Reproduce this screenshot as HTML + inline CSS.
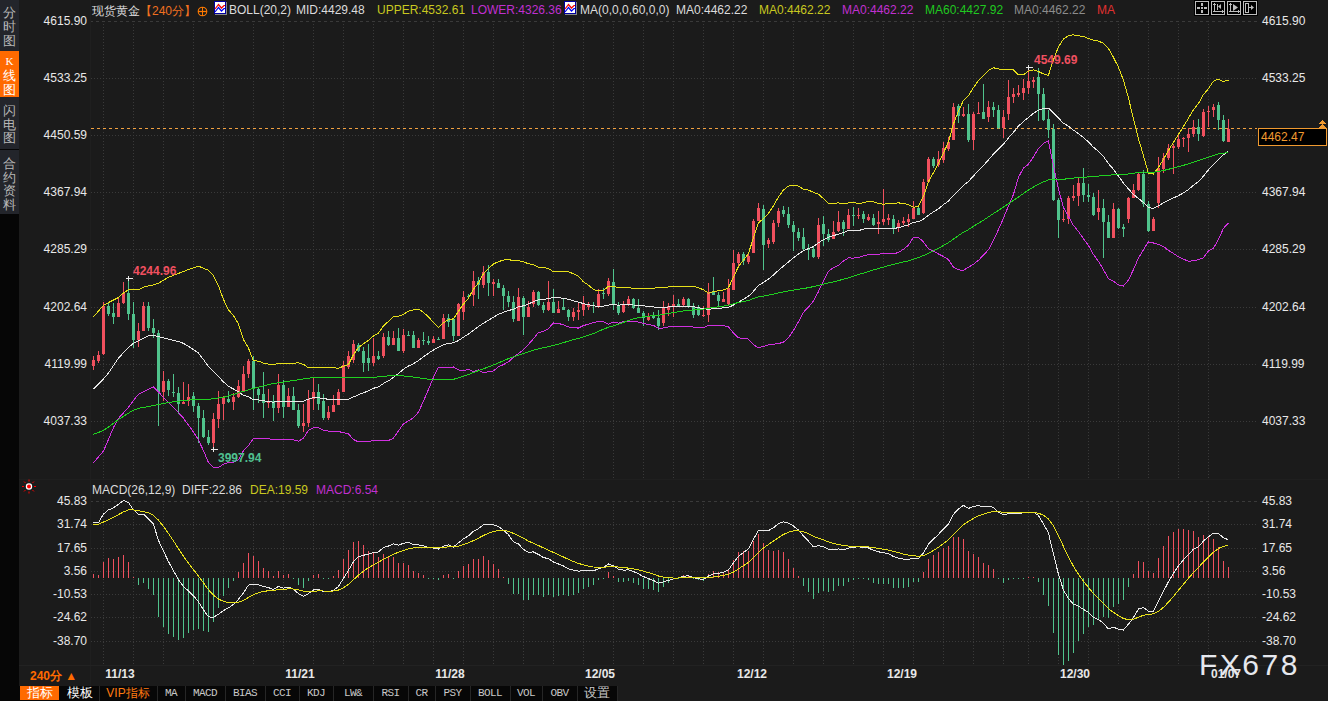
<!DOCTYPE html>
<html><head><meta charset="utf-8"><style>
html,body{margin:0;padding:0;}
body{width:1328px;height:701px;overflow:hidden;position:relative;background:#1b1b1b;font-family:"Liberation Sans", sans-serif;}
svg{position:absolute;left:0;top:0;}
.t{position:absolute;white-space:nowrap;}
</style></head><body>
<svg width="1328" height="701" shape-rendering="crispEdges">
<line x1="90" y1="21.5" x2="1257" y2="21.5" stroke="#3a3a3a" stroke-dasharray="3 3"/>
<line x1="91" y1="78.5" x2="1257" y2="78.5" stroke="#3a3a3a" stroke-dasharray="1 2"/>
<line x1="91" y1="135.5" x2="1257" y2="135.5" stroke="#3a3a3a" stroke-dasharray="1 2"/>
<line x1="91" y1="192.5" x2="1257" y2="192.5" stroke="#3a3a3a" stroke-dasharray="1 2"/>
<line x1="91" y1="249.5" x2="1257" y2="249.5" stroke="#3a3a3a" stroke-dasharray="1 2"/>
<line x1="91" y1="307.5" x2="1257" y2="307.5" stroke="#3a3a3a" stroke-dasharray="1 2"/>
<line x1="91" y1="364.5" x2="1257" y2="364.5" stroke="#3a3a3a" stroke-dasharray="1 2"/>
<line x1="91" y1="421.5" x2="1257" y2="421.5" stroke="#3a3a3a" stroke-dasharray="1 2"/>
<line x1="90" y1="501.5" x2="1257" y2="501.5" stroke="#3a3a3a" stroke-dasharray="3 3"/>
<line x1="91" y1="524.5" x2="1257" y2="524.5" stroke="#3a3a3a" stroke-dasharray="1 2"/>
<line x1="91" y1="548.5" x2="1257" y2="548.5" stroke="#3a3a3a" stroke-dasharray="1 2"/>
<line x1="91" y1="571.5" x2="1257" y2="571.5" stroke="#3a3a3a" stroke-dasharray="1 2"/>
<line x1="91" y1="594.5" x2="1257" y2="594.5" stroke="#3a3a3a" stroke-dasharray="1 2"/>
<line x1="91" y1="617.5" x2="1257" y2="617.5" stroke="#3a3a3a" stroke-dasharray="1 2"/>
<line x1="91" y1="641.5" x2="1257" y2="641.5" stroke="#3a3a3a" stroke-dasharray="1 2"/>
<line x1="103.5" y1="24" x2="103.5" y2="478" stroke="#3a3a3a" stroke-dasharray="1 2"/>
<line x1="103.5" y1="504" x2="103.5" y2="664" stroke="#3a3a3a" stroke-dasharray="1 2"/>
<line x1="133.5" y1="24" x2="133.5" y2="478" stroke="#3a3a3a" stroke-dasharray="1 2"/>
<line x1="133.5" y1="504" x2="133.5" y2="664" stroke="#3a3a3a" stroke-dasharray="1 2"/>
<line x1="163.5" y1="24" x2="163.5" y2="478" stroke="#3a3a3a" stroke-dasharray="1 2"/>
<line x1="163.5" y1="504" x2="163.5" y2="664" stroke="#3a3a3a" stroke-dasharray="1 2"/>
<line x1="193.5" y1="24" x2="193.5" y2="478" stroke="#3a3a3a" stroke-dasharray="1 2"/>
<line x1="193.5" y1="504" x2="193.5" y2="664" stroke="#3a3a3a" stroke-dasharray="1 2"/>
<line x1="223.5" y1="24" x2="223.5" y2="478" stroke="#3a3a3a" stroke-dasharray="1 2"/>
<line x1="223.5" y1="504" x2="223.5" y2="664" stroke="#3a3a3a" stroke-dasharray="1 2"/>
<line x1="253.5" y1="24" x2="253.5" y2="478" stroke="#3a3a3a" stroke-dasharray="1 2"/>
<line x1="253.5" y1="504" x2="253.5" y2="664" stroke="#3a3a3a" stroke-dasharray="1 2"/>
<line x1="283.5" y1="24" x2="283.5" y2="478" stroke="#3a3a3a" stroke-dasharray="1 2"/>
<line x1="283.5" y1="504" x2="283.5" y2="664" stroke="#3a3a3a" stroke-dasharray="1 2"/>
<line x1="313.5" y1="24" x2="313.5" y2="478" stroke="#3a3a3a" stroke-dasharray="1 2"/>
<line x1="313.5" y1="504" x2="313.5" y2="664" stroke="#3a3a3a" stroke-dasharray="1 2"/>
<line x1="343.5" y1="24" x2="343.5" y2="478" stroke="#3a3a3a" stroke-dasharray="1 2"/>
<line x1="343.5" y1="504" x2="343.5" y2="664" stroke="#3a3a3a" stroke-dasharray="1 2"/>
<line x1="373.5" y1="24" x2="373.5" y2="478" stroke="#3a3a3a" stroke-dasharray="1 2"/>
<line x1="373.5" y1="504" x2="373.5" y2="664" stroke="#3a3a3a" stroke-dasharray="1 2"/>
<line x1="403.5" y1="24" x2="403.5" y2="478" stroke="#3a3a3a" stroke-dasharray="1 2"/>
<line x1="403.5" y1="504" x2="403.5" y2="664" stroke="#3a3a3a" stroke-dasharray="1 2"/>
<line x1="433.5" y1="24" x2="433.5" y2="478" stroke="#3a3a3a" stroke-dasharray="1 2"/>
<line x1="433.5" y1="504" x2="433.5" y2="664" stroke="#3a3a3a" stroke-dasharray="1 2"/>
<line x1="463.5" y1="24" x2="463.5" y2="478" stroke="#3a3a3a" stroke-dasharray="1 2"/>
<line x1="463.5" y1="504" x2="463.5" y2="664" stroke="#3a3a3a" stroke-dasharray="1 2"/>
<line x1="493.5" y1="24" x2="493.5" y2="478" stroke="#3a3a3a" stroke-dasharray="1 2"/>
<line x1="493.5" y1="504" x2="493.5" y2="664" stroke="#3a3a3a" stroke-dasharray="1 2"/>
<line x1="523.5" y1="24" x2="523.5" y2="478" stroke="#3a3a3a" stroke-dasharray="1 2"/>
<line x1="523.5" y1="504" x2="523.5" y2="664" stroke="#3a3a3a" stroke-dasharray="1 2"/>
<line x1="553.5" y1="24" x2="553.5" y2="478" stroke="#3a3a3a" stroke-dasharray="1 2"/>
<line x1="553.5" y1="504" x2="553.5" y2="664" stroke="#3a3a3a" stroke-dasharray="1 2"/>
<line x1="583.5" y1="24" x2="583.5" y2="478" stroke="#3a3a3a" stroke-dasharray="1 2"/>
<line x1="583.5" y1="504" x2="583.5" y2="664" stroke="#3a3a3a" stroke-dasharray="1 2"/>
<line x1="613.5" y1="24" x2="613.5" y2="478" stroke="#3a3a3a" stroke-dasharray="1 2"/>
<line x1="613.5" y1="504" x2="613.5" y2="664" stroke="#3a3a3a" stroke-dasharray="1 2"/>
<line x1="643.5" y1="24" x2="643.5" y2="478" stroke="#3a3a3a" stroke-dasharray="1 2"/>
<line x1="643.5" y1="504" x2="643.5" y2="664" stroke="#3a3a3a" stroke-dasharray="1 2"/>
<line x1="673.5" y1="24" x2="673.5" y2="478" stroke="#3a3a3a" stroke-dasharray="1 2"/>
<line x1="673.5" y1="504" x2="673.5" y2="664" stroke="#3a3a3a" stroke-dasharray="1 2"/>
<line x1="703.5" y1="24" x2="703.5" y2="478" stroke="#3a3a3a" stroke-dasharray="1 2"/>
<line x1="703.5" y1="504" x2="703.5" y2="664" stroke="#3a3a3a" stroke-dasharray="1 2"/>
<line x1="733.5" y1="24" x2="733.5" y2="478" stroke="#3a3a3a" stroke-dasharray="1 2"/>
<line x1="733.5" y1="504" x2="733.5" y2="664" stroke="#3a3a3a" stroke-dasharray="1 2"/>
<line x1="763.5" y1="24" x2="763.5" y2="478" stroke="#3a3a3a" stroke-dasharray="1 2"/>
<line x1="763.5" y1="504" x2="763.5" y2="664" stroke="#3a3a3a" stroke-dasharray="1 2"/>
<line x1="793.5" y1="24" x2="793.5" y2="478" stroke="#3a3a3a" stroke-dasharray="1 2"/>
<line x1="793.5" y1="504" x2="793.5" y2="664" stroke="#3a3a3a" stroke-dasharray="1 2"/>
<line x1="823.5" y1="24" x2="823.5" y2="478" stroke="#3a3a3a" stroke-dasharray="1 2"/>
<line x1="823.5" y1="504" x2="823.5" y2="664" stroke="#3a3a3a" stroke-dasharray="1 2"/>
<line x1="853.5" y1="24" x2="853.5" y2="478" stroke="#3a3a3a" stroke-dasharray="1 2"/>
<line x1="853.5" y1="504" x2="853.5" y2="664" stroke="#3a3a3a" stroke-dasharray="1 2"/>
<line x1="883.5" y1="24" x2="883.5" y2="478" stroke="#3a3a3a" stroke-dasharray="1 2"/>
<line x1="883.5" y1="504" x2="883.5" y2="664" stroke="#3a3a3a" stroke-dasharray="1 2"/>
<line x1="913.5" y1="24" x2="913.5" y2="478" stroke="#3a3a3a" stroke-dasharray="1 2"/>
<line x1="913.5" y1="504" x2="913.5" y2="664" stroke="#3a3a3a" stroke-dasharray="1 2"/>
<line x1="943.5" y1="24" x2="943.5" y2="478" stroke="#3a3a3a" stroke-dasharray="1 2"/>
<line x1="943.5" y1="504" x2="943.5" y2="664" stroke="#3a3a3a" stroke-dasharray="1 2"/>
<line x1="973.5" y1="24" x2="973.5" y2="478" stroke="#3a3a3a" stroke-dasharray="1 2"/>
<line x1="973.5" y1="504" x2="973.5" y2="664" stroke="#3a3a3a" stroke-dasharray="1 2"/>
<line x1="1003.5" y1="24" x2="1003.5" y2="478" stroke="#3a3a3a" stroke-dasharray="1 2"/>
<line x1="1003.5" y1="504" x2="1003.5" y2="664" stroke="#3a3a3a" stroke-dasharray="1 2"/>
<line x1="1028.5" y1="24" x2="1028.5" y2="478" stroke="#3a3a3a" stroke-dasharray="1 2"/>
<line x1="1028.5" y1="504" x2="1028.5" y2="664" stroke="#3a3a3a" stroke-dasharray="1 2"/>
<line x1="1058.5" y1="24" x2="1058.5" y2="478" stroke="#3a3a3a" stroke-dasharray="1 2"/>
<line x1="1058.5" y1="504" x2="1058.5" y2="664" stroke="#3a3a3a" stroke-dasharray="1 2"/>
<line x1="1088.5" y1="24" x2="1088.5" y2="478" stroke="#3a3a3a" stroke-dasharray="1 2"/>
<line x1="1088.5" y1="504" x2="1088.5" y2="664" stroke="#3a3a3a" stroke-dasharray="1 2"/>
<line x1="1118.5" y1="24" x2="1118.5" y2="478" stroke="#3a3a3a" stroke-dasharray="1 2"/>
<line x1="1118.5" y1="504" x2="1118.5" y2="664" stroke="#3a3a3a" stroke-dasharray="1 2"/>
<line x1="1148.5" y1="24" x2="1148.5" y2="478" stroke="#3a3a3a" stroke-dasharray="1 2"/>
<line x1="1148.5" y1="504" x2="1148.5" y2="664" stroke="#3a3a3a" stroke-dasharray="1 2"/>
<line x1="1178.5" y1="24" x2="1178.5" y2="478" stroke="#3a3a3a" stroke-dasharray="1 2"/>
<line x1="1178.5" y1="504" x2="1178.5" y2="664" stroke="#3a3a3a" stroke-dasharray="1 2"/>
<line x1="1208.5" y1="24" x2="1208.5" y2="478" stroke="#3a3a3a" stroke-dasharray="1 2"/>
<line x1="1208.5" y1="504" x2="1208.5" y2="664" stroke="#3a3a3a" stroke-dasharray="1 2"/>
<rect x="90" y="0" width="1" height="686" fill="#1f1f1f"/>
<rect x="19" y="479" width="1309" height="1" fill="#1f1f1f"/>
<rect x="19" y="665" width="1309" height="1" fill="#222222"/>
<line x1="91" y1="128.5" x2="1257" y2="128.5" stroke="#f0a040" stroke-dasharray="3 3"/>
<rect x="93" y="356" width="1" height="14" fill="#f0505e"/>
<rect x="92" y="360" width="3" height="6" fill="#f0505e"/>
<rect x="98" y="351" width="1" height="12" fill="#f0505e"/>
<rect x="97" y="355" width="3" height="6" fill="#f0505e"/>
<rect x="103" y="302" width="1" height="53" fill="#f0505e"/>
<rect x="102" y="306" width="3" height="48" fill="#f0505e"/>
<rect x="108" y="303" width="1" height="13" fill="#50c38c"/>
<rect x="107" y="306" width="3" height="8" fill="#50c38c"/>
<rect x="113" y="303" width="1" height="21" fill="#50c38c"/>
<rect x="112" y="313" width="3" height="4" fill="#50c38c"/>
<rect x="118" y="298" width="1" height="19" fill="#f0505e"/>
<rect x="117" y="303" width="3" height="14" fill="#f0505e"/>
<rect x="123" y="282" width="1" height="22" fill="#f0505e"/>
<rect x="122" y="293" width="3" height="10" fill="#f0505e"/>
<rect x="128" y="276" width="1" height="44" fill="#50c38c"/>
<rect x="127" y="293" width="3" height="21" fill="#50c38c"/>
<rect x="133" y="302" width="1" height="46" fill="#50c38c"/>
<rect x="132" y="314" width="3" height="26" fill="#50c38c"/>
<rect x="138" y="323" width="1" height="24" fill="#f0505e"/>
<rect x="137" y="331" width="3" height="9" fill="#f0505e"/>
<rect x="143" y="302" width="1" height="29" fill="#f0505e"/>
<rect x="142" y="306" width="3" height="25" fill="#f0505e"/>
<rect x="148" y="302" width="1" height="29" fill="#50c38c"/>
<rect x="147" y="306" width="3" height="22" fill="#50c38c"/>
<rect x="153" y="319" width="1" height="19" fill="#50c38c"/>
<rect x="152" y="328" width="3" height="5" fill="#50c38c"/>
<rect x="158" y="330" width="1" height="96" fill="#50c38c"/>
<rect x="157" y="333" width="3" height="59" fill="#50c38c"/>
<rect x="163" y="371" width="1" height="30" fill="#f0505e"/>
<rect x="162" y="381" width="3" height="11" fill="#f0505e"/>
<rect x="168" y="379" width="1" height="17" fill="#50c38c"/>
<rect x="167" y="381" width="3" height="9" fill="#50c38c"/>
<rect x="173" y="374" width="1" height="23" fill="#50c38c"/>
<rect x="172" y="392" width="3" height="1" fill="#50c38c"/>
<rect x="178" y="387" width="1" height="27" fill="#50c38c"/>
<rect x="177" y="393" width="3" height="11" fill="#50c38c"/>
<rect x="183" y="382" width="1" height="22" fill="#f0505e"/>
<rect x="182" y="402" width="3" height="2" fill="#f0505e"/>
<rect x="188" y="384" width="1" height="22" fill="#f0505e"/>
<rect x="187" y="397" width="3" height="4" fill="#f0505e"/>
<rect x="193" y="392" width="1" height="20" fill="#50c38c"/>
<rect x="192" y="396" width="3" height="10" fill="#50c38c"/>
<rect x="198" y="403" width="1" height="40" fill="#50c38c"/>
<rect x="197" y="406" width="3" height="12" fill="#50c38c"/>
<rect x="203" y="410" width="1" height="28" fill="#50c38c"/>
<rect x="202" y="418" width="3" height="19" fill="#50c38c"/>
<rect x="208" y="430" width="1" height="15" fill="#50c38c"/>
<rect x="207" y="437" width="3" height="6" fill="#50c38c"/>
<rect x="213" y="413" width="1" height="37" fill="#f0505e"/>
<rect x="212" y="419" width="3" height="24" fill="#f0505e"/>
<rect x="218" y="391" width="1" height="37" fill="#f0505e"/>
<rect x="217" y="404" width="3" height="15" fill="#f0505e"/>
<rect x="223" y="396" width="1" height="24" fill="#f0505e"/>
<rect x="222" y="398" width="3" height="6" fill="#f0505e"/>
<rect x="228" y="391" width="1" height="12" fill="#50c38c"/>
<rect x="227" y="399" width="3" height="3" fill="#50c38c"/>
<rect x="233" y="393" width="1" height="17" fill="#f0505e"/>
<rect x="232" y="397" width="3" height="5" fill="#f0505e"/>
<rect x="238" y="380" width="1" height="18" fill="#f0505e"/>
<rect x="237" y="386" width="3" height="11" fill="#f0505e"/>
<rect x="243" y="366" width="1" height="25" fill="#f0505e"/>
<rect x="242" y="374" width="3" height="17" fill="#f0505e"/>
<rect x="248" y="359" width="1" height="19" fill="#f0505e"/>
<rect x="247" y="361" width="3" height="13" fill="#f0505e"/>
<rect x="253" y="356" width="1" height="54" fill="#50c38c"/>
<rect x="252" y="361" width="3" height="27" fill="#50c38c"/>
<rect x="258" y="388" width="1" height="15" fill="#50c38c"/>
<rect x="257" y="389" width="3" height="6" fill="#50c38c"/>
<rect x="263" y="372" width="1" height="46" fill="#50c38c"/>
<rect x="262" y="394" width="3" height="9" fill="#50c38c"/>
<rect x="268" y="389" width="1" height="19" fill="#f0505e"/>
<rect x="267" y="402" width="3" height="1" fill="#f0505e"/>
<rect x="273" y="395" width="1" height="26" fill="#50c38c"/>
<rect x="272" y="401" width="3" height="7" fill="#50c38c"/>
<rect x="278" y="374" width="1" height="39" fill="#f0505e"/>
<rect x="277" y="385" width="3" height="23" fill="#f0505e"/>
<rect x="283" y="380" width="1" height="38" fill="#50c38c"/>
<rect x="282" y="385" width="3" height="22" fill="#50c38c"/>
<rect x="288" y="388" width="1" height="19" fill="#f0505e"/>
<rect x="287" y="396" width="3" height="11" fill="#f0505e"/>
<rect x="293" y="387" width="1" height="23" fill="#50c38c"/>
<rect x="292" y="396" width="3" height="14" fill="#50c38c"/>
<rect x="298" y="404" width="1" height="24" fill="#50c38c"/>
<rect x="297" y="410" width="3" height="16" fill="#50c38c"/>
<rect x="303" y="404" width="1" height="28" fill="#f0505e"/>
<rect x="302" y="423" width="3" height="3" fill="#f0505e"/>
<rect x="308" y="390" width="1" height="37" fill="#f0505e"/>
<rect x="307" y="399" width="3" height="24" fill="#f0505e"/>
<rect x="313" y="378" width="1" height="32" fill="#f0505e"/>
<rect x="312" y="392" width="3" height="7" fill="#f0505e"/>
<rect x="318" y="384" width="1" height="26" fill="#50c38c"/>
<rect x="317" y="392" width="3" height="12" fill="#50c38c"/>
<rect x="323" y="394" width="1" height="26" fill="#50c38c"/>
<rect x="322" y="401" width="3" height="17" fill="#50c38c"/>
<rect x="328" y="406" width="1" height="14" fill="#f0505e"/>
<rect x="327" y="412" width="3" height="6" fill="#f0505e"/>
<rect x="333" y="395" width="1" height="17" fill="#f0505e"/>
<rect x="332" y="405" width="3" height="7" fill="#f0505e"/>
<rect x="338" y="389" width="1" height="16" fill="#f0505e"/>
<rect x="337" y="392" width="3" height="13" fill="#f0505e"/>
<rect x="343" y="361" width="1" height="31" fill="#f0505e"/>
<rect x="342" y="365" width="3" height="27" fill="#f0505e"/>
<rect x="348" y="351" width="1" height="18" fill="#f0505e"/>
<rect x="347" y="356" width="3" height="11" fill="#f0505e"/>
<rect x="353" y="340" width="1" height="23" fill="#f0505e"/>
<rect x="352" y="344" width="3" height="16" fill="#f0505e"/>
<rect x="358" y="343" width="1" height="9" fill="#50c38c"/>
<rect x="357" y="345" width="3" height="6" fill="#50c38c"/>
<rect x="363" y="347" width="1" height="25" fill="#50c38c"/>
<rect x="362" y="351" width="3" height="12" fill="#50c38c"/>
<rect x="368" y="344" width="1" height="27" fill="#50c38c"/>
<rect x="367" y="358" width="3" height="5" fill="#50c38c"/>
<rect x="373" y="338" width="1" height="28" fill="#f0505e"/>
<rect x="372" y="356" width="3" height="7" fill="#f0505e"/>
<rect x="378" y="351" width="1" height="9" fill="#50c38c"/>
<rect x="377" y="356" width="3" height="3" fill="#50c38c"/>
<rect x="383" y="333" width="1" height="25" fill="#f0505e"/>
<rect x="382" y="337" width="3" height="19" fill="#f0505e"/>
<rect x="388" y="331" width="1" height="15" fill="#50c38c"/>
<rect x="387" y="337" width="3" height="8" fill="#50c38c"/>
<rect x="393" y="331" width="1" height="14" fill="#f0505e"/>
<rect x="392" y="338" width="3" height="7" fill="#f0505e"/>
<rect x="398" y="328" width="1" height="23" fill="#50c38c"/>
<rect x="397" y="338" width="3" height="13" fill="#50c38c"/>
<rect x="403" y="329" width="1" height="24" fill="#f0505e"/>
<rect x="402" y="335" width="3" height="16" fill="#f0505e"/>
<rect x="408" y="331" width="1" height="5" fill="#50c38c"/>
<rect x="407" y="335" width="3" height="1" fill="#50c38c"/>
<rect x="413" y="331" width="1" height="17" fill="#50c38c"/>
<rect x="412" y="335" width="3" height="13" fill="#50c38c"/>
<rect x="418" y="338" width="1" height="10" fill="#f0505e"/>
<rect x="417" y="340" width="3" height="8" fill="#f0505e"/>
<rect x="423" y="332" width="1" height="13" fill="#50c38c"/>
<rect x="422" y="340" width="3" height="1" fill="#50c38c"/>
<rect x="428" y="336" width="1" height="9" fill="#50c38c"/>
<rect x="427" y="341" width="3" height="2" fill="#50c38c"/>
<rect x="433" y="336" width="1" height="7" fill="#f0505e"/>
<rect x="432" y="339" width="3" height="4" fill="#f0505e"/>
<rect x="438" y="337" width="1" height="3" fill="#50c38c"/>
<rect x="437" y="339" width="3" height="1" fill="#50c38c"/>
<rect x="443" y="314" width="1" height="25" fill="#f0505e"/>
<rect x="442" y="318" width="3" height="21" fill="#f0505e"/>
<rect x="448" y="314" width="1" height="13" fill="#50c38c"/>
<rect x="447" y="318" width="3" height="4" fill="#50c38c"/>
<rect x="453" y="318" width="1" height="23" fill="#50c38c"/>
<rect x="452" y="319" width="3" height="17" fill="#50c38c"/>
<rect x="458" y="303" width="1" height="33" fill="#f0505e"/>
<rect x="457" y="304" width="3" height="32" fill="#f0505e"/>
<rect x="463" y="291" width="1" height="29" fill="#f0505e"/>
<rect x="462" y="297" width="3" height="15" fill="#f0505e"/>
<rect x="468" y="294" width="1" height="4" fill="#50c38c"/>
<rect x="467" y="296" width="3" height="1" fill="#50c38c"/>
<rect x="473" y="271" width="1" height="35" fill="#f0505e"/>
<rect x="472" y="281" width="3" height="14" fill="#f0505e"/>
<rect x="478" y="277" width="1" height="22" fill="#50c38c"/>
<rect x="477" y="281" width="3" height="4" fill="#50c38c"/>
<rect x="483" y="266" width="1" height="22" fill="#f0505e"/>
<rect x="482" y="272" width="3" height="13" fill="#f0505e"/>
<rect x="488" y="265" width="1" height="31" fill="#50c38c"/>
<rect x="487" y="272" width="3" height="11" fill="#50c38c"/>
<rect x="493" y="279" width="1" height="17" fill="#f0505e"/>
<rect x="492" y="282" width="3" height="2" fill="#f0505e"/>
<rect x="498" y="279" width="1" height="9" fill="#50c38c"/>
<rect x="497" y="283" width="3" height="5" fill="#50c38c"/>
<rect x="503" y="285" width="1" height="25" fill="#50c38c"/>
<rect x="502" y="288" width="3" height="8" fill="#50c38c"/>
<rect x="508" y="291" width="1" height="16" fill="#50c38c"/>
<rect x="507" y="296" width="3" height="6" fill="#50c38c"/>
<rect x="513" y="296" width="1" height="26" fill="#50c38c"/>
<rect x="512" y="302" width="3" height="17" fill="#50c38c"/>
<rect x="518" y="288" width="1" height="33" fill="#f0505e"/>
<rect x="517" y="297" width="3" height="24" fill="#f0505e"/>
<rect x="523" y="296" width="1" height="39" fill="#50c38c"/>
<rect x="522" y="298" width="3" height="19" fill="#50c38c"/>
<rect x="528" y="301" width="1" height="16" fill="#f0505e"/>
<rect x="527" y="307" width="3" height="10" fill="#f0505e"/>
<rect x="533" y="290" width="1" height="17" fill="#f0505e"/>
<rect x="532" y="292" width="3" height="12" fill="#f0505e"/>
<rect x="538" y="291" width="1" height="15" fill="#50c38c"/>
<rect x="537" y="292" width="3" height="13" fill="#50c38c"/>
<rect x="543" y="302" width="1" height="11" fill="#50c38c"/>
<rect x="542" y="305" width="3" height="5" fill="#50c38c"/>
<rect x="548" y="281" width="1" height="30" fill="#f0505e"/>
<rect x="547" y="302" width="3" height="8" fill="#f0505e"/>
<rect x="553" y="289" width="1" height="24" fill="#50c38c"/>
<rect x="552" y="302" width="3" height="11" fill="#50c38c"/>
<rect x="558" y="301" width="1" height="12" fill="#f0505e"/>
<rect x="557" y="309" width="3" height="4" fill="#f0505e"/>
<rect x="563" y="298" width="1" height="12" fill="#50c38c"/>
<rect x="562" y="307" width="3" height="3" fill="#50c38c"/>
<rect x="568" y="309" width="1" height="12" fill="#50c38c"/>
<rect x="567" y="310" width="3" height="7" fill="#50c38c"/>
<rect x="573" y="308" width="1" height="13" fill="#f0505e"/>
<rect x="572" y="312" width="3" height="5" fill="#f0505e"/>
<rect x="578" y="302" width="1" height="18" fill="#f0505e"/>
<rect x="577" y="310" width="3" height="2" fill="#f0505e"/>
<rect x="583" y="296" width="1" height="20" fill="#f0505e"/>
<rect x="582" y="304" width="3" height="6" fill="#f0505e"/>
<rect x="588" y="302" width="1" height="8" fill="#f0505e"/>
<rect x="587" y="304" width="3" height="3" fill="#f0505e"/>
<rect x="593" y="302" width="1" height="11" fill="#50c38c"/>
<rect x="592" y="305" width="3" height="1" fill="#50c38c"/>
<rect x="598" y="289" width="1" height="19" fill="#f0505e"/>
<rect x="597" y="294" width="3" height="12" fill="#f0505e"/>
<rect x="603" y="288" width="1" height="11" fill="#50c38c"/>
<rect x="602" y="293" width="3" height="1" fill="#50c38c"/>
<rect x="608" y="278" width="1" height="18" fill="#f0505e"/>
<rect x="607" y="281" width="3" height="13" fill="#f0505e"/>
<rect x="613" y="269" width="1" height="41" fill="#50c38c"/>
<rect x="612" y="282" width="3" height="23" fill="#50c38c"/>
<rect x="618" y="302" width="1" height="13" fill="#50c38c"/>
<rect x="617" y="305" width="3" height="8" fill="#50c38c"/>
<rect x="623" y="301" width="1" height="12" fill="#f0505e"/>
<rect x="622" y="305" width="3" height="7" fill="#f0505e"/>
<rect x="628" y="296" width="1" height="10" fill="#f0505e"/>
<rect x="627" y="299" width="3" height="6" fill="#f0505e"/>
<rect x="633" y="298" width="1" height="11" fill="#50c38c"/>
<rect x="632" y="299" width="3" height="9" fill="#50c38c"/>
<rect x="638" y="299" width="1" height="14" fill="#50c38c"/>
<rect x="637" y="308" width="3" height="5" fill="#50c38c"/>
<rect x="643" y="311" width="1" height="15" fill="#50c38c"/>
<rect x="642" y="313" width="3" height="5" fill="#50c38c"/>
<rect x="648" y="313" width="1" height="8" fill="#f0505e"/>
<rect x="647" y="317" width="3" height="3" fill="#f0505e"/>
<rect x="653" y="312" width="1" height="7" fill="#50c38c"/>
<rect x="652" y="316" width="3" height="2" fill="#50c38c"/>
<rect x="658" y="310" width="1" height="20" fill="#50c38c"/>
<rect x="657" y="318" width="3" height="8" fill="#50c38c"/>
<rect x="663" y="301" width="1" height="25" fill="#f0505e"/>
<rect x="662" y="307" width="3" height="16" fill="#f0505e"/>
<rect x="668" y="303" width="1" height="13" fill="#f0505e"/>
<rect x="667" y="306" width="3" height="4" fill="#f0505e"/>
<rect x="673" y="295" width="1" height="22" fill="#f0505e"/>
<rect x="672" y="304" width="3" height="3" fill="#f0505e"/>
<rect x="678" y="299" width="1" height="7" fill="#50c38c"/>
<rect x="677" y="304" width="3" height="2" fill="#50c38c"/>
<rect x="683" y="297" width="1" height="9" fill="#f0505e"/>
<rect x="682" y="299" width="3" height="6" fill="#f0505e"/>
<rect x="688" y="298" width="1" height="10" fill="#50c38c"/>
<rect x="687" y="299" width="3" height="7" fill="#50c38c"/>
<rect x="693" y="303" width="1" height="15" fill="#50c38c"/>
<rect x="692" y="306" width="3" height="9" fill="#50c38c"/>
<rect x="698" y="305" width="1" height="11" fill="#50c38c"/>
<rect x="697" y="307" width="3" height="8" fill="#50c38c"/>
<rect x="703" y="306" width="1" height="11" fill="#f0505e"/>
<rect x="702" y="315" width="3" height="1" fill="#f0505e"/>
<rect x="708" y="283" width="1" height="39" fill="#f0505e"/>
<rect x="707" y="292" width="3" height="23" fill="#f0505e"/>
<rect x="713" y="277" width="1" height="18" fill="#50c38c"/>
<rect x="712" y="292" width="3" height="3" fill="#50c38c"/>
<rect x="718" y="292" width="1" height="14" fill="#50c38c"/>
<rect x="717" y="295" width="3" height="6" fill="#50c38c"/>
<rect x="723" y="292" width="1" height="10" fill="#f0505e"/>
<rect x="722" y="299" width="3" height="3" fill="#f0505e"/>
<rect x="728" y="279" width="1" height="27" fill="#f0505e"/>
<rect x="727" y="288" width="3" height="16" fill="#f0505e"/>
<rect x="733" y="250" width="1" height="40" fill="#f0505e"/>
<rect x="732" y="263" width="3" height="27" fill="#f0505e"/>
<rect x="738" y="252" width="1" height="14" fill="#f0505e"/>
<rect x="737" y="254" width="3" height="9" fill="#f0505e"/>
<rect x="743" y="252" width="1" height="13" fill="#50c38c"/>
<rect x="742" y="254" width="3" height="7" fill="#50c38c"/>
<rect x="748" y="253" width="1" height="11" fill="#f0505e"/>
<rect x="747" y="256" width="3" height="6" fill="#f0505e"/>
<rect x="753" y="219" width="1" height="34" fill="#f0505e"/>
<rect x="752" y="221" width="3" height="32" fill="#f0505e"/>
<rect x="758" y="203" width="1" height="18" fill="#f0505e"/>
<rect x="757" y="208" width="3" height="13" fill="#f0505e"/>
<rect x="763" y="205" width="1" height="65" fill="#50c38c"/>
<rect x="762" y="209" width="3" height="36" fill="#50c38c"/>
<rect x="768" y="238" width="1" height="10" fill="#f0505e"/>
<rect x="767" y="240" width="3" height="4" fill="#f0505e"/>
<rect x="773" y="220" width="1" height="24" fill="#f0505e"/>
<rect x="772" y="223" width="3" height="19" fill="#f0505e"/>
<rect x="778" y="208" width="1" height="19" fill="#f0505e"/>
<rect x="777" y="211" width="3" height="12" fill="#f0505e"/>
<rect x="783" y="206" width="1" height="11" fill="#50c38c"/>
<rect x="782" y="210" width="3" height="4" fill="#50c38c"/>
<rect x="788" y="207" width="1" height="21" fill="#50c38c"/>
<rect x="787" y="214" width="3" height="11" fill="#50c38c"/>
<rect x="793" y="221" width="1" height="30" fill="#50c38c"/>
<rect x="792" y="225" width="3" height="7" fill="#50c38c"/>
<rect x="798" y="228" width="1" height="13" fill="#50c38c"/>
<rect x="797" y="232" width="3" height="6" fill="#50c38c"/>
<rect x="803" y="228" width="1" height="22" fill="#50c38c"/>
<rect x="802" y="237" width="3" height="12" fill="#50c38c"/>
<rect x="808" y="244" width="1" height="16" fill="#50c38c"/>
<rect x="807" y="249" width="3" height="1" fill="#50c38c"/>
<rect x="813" y="247" width="1" height="11" fill="#50c38c"/>
<rect x="812" y="249" width="3" height="8" fill="#50c38c"/>
<rect x="818" y="218" width="1" height="41" fill="#f0505e"/>
<rect x="817" y="225" width="3" height="32" fill="#f0505e"/>
<rect x="823" y="216" width="1" height="30" fill="#50c38c"/>
<rect x="822" y="224" width="3" height="10" fill="#50c38c"/>
<rect x="828" y="229" width="1" height="13" fill="#50c38c"/>
<rect x="827" y="234" width="3" height="6" fill="#50c38c"/>
<rect x="833" y="221" width="1" height="18" fill="#f0505e"/>
<rect x="832" y="232" width="3" height="7" fill="#f0505e"/>
<rect x="838" y="211" width="1" height="21" fill="#f0505e"/>
<rect x="837" y="222" width="3" height="9" fill="#f0505e"/>
<rect x="843" y="220" width="1" height="16" fill="#50c38c"/>
<rect x="842" y="222" width="3" height="7" fill="#50c38c"/>
<rect x="848" y="209" width="1" height="20" fill="#f0505e"/>
<rect x="847" y="215" width="3" height="14" fill="#f0505e"/>
<rect x="853" y="207" width="1" height="19" fill="#50c38c"/>
<rect x="852" y="215" width="3" height="1" fill="#50c38c"/>
<rect x="858" y="208" width="1" height="11" fill="#f0505e"/>
<rect x="857" y="215" width="3" height="1" fill="#f0505e"/>
<rect x="863" y="211" width="1" height="12" fill="#50c38c"/>
<rect x="862" y="214" width="3" height="5" fill="#50c38c"/>
<rect x="868" y="214" width="1" height="7" fill="#f0505e"/>
<rect x="867" y="217" width="3" height="3" fill="#f0505e"/>
<rect x="873" y="214" width="1" height="12" fill="#50c38c"/>
<rect x="872" y="218" width="3" height="7" fill="#50c38c"/>
<rect x="878" y="211" width="1" height="23" fill="#f0505e"/>
<rect x="877" y="222" width="3" height="2" fill="#f0505e"/>
<rect x="883" y="189" width="1" height="36" fill="#f0505e"/>
<rect x="882" y="219" width="3" height="3" fill="#f0505e"/>
<rect x="888" y="214" width="1" height="11" fill="#f0505e"/>
<rect x="887" y="218" width="3" height="2" fill="#f0505e"/>
<rect x="893" y="215" width="1" height="19" fill="#50c38c"/>
<rect x="892" y="219" width="3" height="10" fill="#50c38c"/>
<rect x="898" y="220" width="1" height="12" fill="#f0505e"/>
<rect x="897" y="223" width="3" height="5" fill="#f0505e"/>
<rect x="903" y="217" width="1" height="8" fill="#f0505e"/>
<rect x="902" y="221" width="3" height="2" fill="#f0505e"/>
<rect x="908" y="214" width="1" height="13" fill="#f0505e"/>
<rect x="907" y="219" width="3" height="3" fill="#f0505e"/>
<rect x="913" y="201" width="1" height="18" fill="#f0505e"/>
<rect x="912" y="208" width="3" height="11" fill="#f0505e"/>
<rect x="918" y="207" width="1" height="8" fill="#50c38c"/>
<rect x="917" y="208" width="3" height="7" fill="#50c38c"/>
<rect x="923" y="179" width="1" height="35" fill="#f0505e"/>
<rect x="922" y="182" width="3" height="31" fill="#f0505e"/>
<rect x="928" y="157" width="1" height="25" fill="#f0505e"/>
<rect x="927" y="159" width="3" height="23" fill="#f0505e"/>
<rect x="933" y="157" width="1" height="11" fill="#50c38c"/>
<rect x="932" y="159" width="3" height="7" fill="#50c38c"/>
<rect x="938" y="151" width="1" height="16" fill="#f0505e"/>
<rect x="937" y="159" width="3" height="6" fill="#f0505e"/>
<rect x="943" y="142" width="1" height="21" fill="#f0505e"/>
<rect x="942" y="148" width="3" height="12" fill="#f0505e"/>
<rect x="948" y="137" width="1" height="14" fill="#f0505e"/>
<rect x="947" y="142" width="3" height="7" fill="#f0505e"/>
<rect x="953" y="103" width="1" height="37" fill="#f0505e"/>
<rect x="952" y="107" width="3" height="33" fill="#f0505e"/>
<rect x="958" y="104" width="1" height="19" fill="#50c38c"/>
<rect x="957" y="106" width="3" height="10" fill="#50c38c"/>
<rect x="963" y="107" width="1" height="10" fill="#f0505e"/>
<rect x="962" y="114" width="3" height="2" fill="#f0505e"/>
<rect x="968" y="104" width="1" height="38" fill="#50c38c"/>
<rect x="967" y="114" width="3" height="26" fill="#50c38c"/>
<rect x="973" y="112" width="1" height="38" fill="#f0505e"/>
<rect x="972" y="114" width="3" height="26" fill="#f0505e"/>
<rect x="978" y="102" width="1" height="12" fill="#f0505e"/>
<rect x="977" y="113" width="3" height="1" fill="#f0505e"/>
<rect x="983" y="84" width="1" height="35" fill="#50c38c"/>
<rect x="982" y="112" width="3" height="7" fill="#50c38c"/>
<rect x="988" y="101" width="1" height="21" fill="#f0505e"/>
<rect x="987" y="107" width="3" height="10" fill="#f0505e"/>
<rect x="993" y="102" width="1" height="15" fill="#50c38c"/>
<rect x="992" y="107" width="3" height="3" fill="#50c38c"/>
<rect x="998" y="105" width="1" height="24" fill="#50c38c"/>
<rect x="997" y="110" width="3" height="18" fill="#50c38c"/>
<rect x="1003" y="110" width="1" height="28" fill="#f0505e"/>
<rect x="1002" y="117" width="3" height="11" fill="#f0505e"/>
<rect x="1008" y="80" width="1" height="40" fill="#f0505e"/>
<rect x="1007" y="97" width="3" height="17" fill="#f0505e"/>
<rect x="1013" y="88" width="1" height="15" fill="#f0505e"/>
<rect x="1012" y="94" width="3" height="3" fill="#f0505e"/>
<rect x="1018" y="85" width="1" height="12" fill="#f0505e"/>
<rect x="1017" y="93" width="3" height="2" fill="#f0505e"/>
<rect x="1023" y="79" width="1" height="21" fill="#f0505e"/>
<rect x="1022" y="88" width="3" height="5" fill="#f0505e"/>
<rect x="1028" y="68" width="1" height="26" fill="#f0505e"/>
<rect x="1027" y="81" width="3" height="7" fill="#f0505e"/>
<rect x="1033" y="77" width="1" height="11" fill="#f0505e"/>
<rect x="1032" y="80" width="3" height="2" fill="#f0505e"/>
<rect x="1038" y="68" width="1" height="53" fill="#50c38c"/>
<rect x="1037" y="77" width="3" height="17" fill="#50c38c"/>
<rect x="1043" y="88" width="1" height="33" fill="#50c38c"/>
<rect x="1042" y="94" width="3" height="26" fill="#50c38c"/>
<rect x="1048" y="110" width="1" height="28" fill="#50c38c"/>
<rect x="1047" y="119" width="3" height="11" fill="#50c38c"/>
<rect x="1053" y="124" width="1" height="77" fill="#50c38c"/>
<rect x="1052" y="129" width="3" height="71" fill="#50c38c"/>
<rect x="1058" y="198" width="1" height="40" fill="#50c38c"/>
<rect x="1057" y="200" width="3" height="20" fill="#50c38c"/>
<rect x="1063" y="210" width="1" height="12" fill="#f0505e"/>
<rect x="1062" y="219" width="3" height="1" fill="#f0505e"/>
<rect x="1068" y="196" width="1" height="28" fill="#f0505e"/>
<rect x="1067" y="198" width="3" height="21" fill="#f0505e"/>
<rect x="1073" y="185" width="1" height="16" fill="#f0505e"/>
<rect x="1072" y="196" width="3" height="2" fill="#f0505e"/>
<rect x="1078" y="178" width="1" height="28" fill="#f0505e"/>
<rect x="1077" y="183" width="3" height="13" fill="#f0505e"/>
<rect x="1083" y="168" width="1" height="34" fill="#50c38c"/>
<rect x="1082" y="183" width="3" height="12" fill="#50c38c"/>
<rect x="1088" y="184" width="1" height="18" fill="#50c38c"/>
<rect x="1087" y="195" width="3" height="2" fill="#50c38c"/>
<rect x="1093" y="193" width="1" height="23" fill="#50c38c"/>
<rect x="1092" y="197" width="3" height="18" fill="#50c38c"/>
<rect x="1098" y="190" width="1" height="30" fill="#f0505e"/>
<rect x="1097" y="208" width="3" height="4" fill="#f0505e"/>
<rect x="1103" y="199" width="1" height="59" fill="#50c38c"/>
<rect x="1102" y="208" width="3" height="14" fill="#50c38c"/>
<rect x="1108" y="215" width="1" height="23" fill="#50c38c"/>
<rect x="1107" y="222" width="3" height="16" fill="#50c38c"/>
<rect x="1113" y="203" width="1" height="35" fill="#f0505e"/>
<rect x="1112" y="209" width="3" height="29" fill="#f0505e"/>
<rect x="1118" y="208" width="1" height="21" fill="#50c38c"/>
<rect x="1117" y="209" width="3" height="19" fill="#50c38c"/>
<rect x="1123" y="224" width="1" height="13" fill="#50c38c"/>
<rect x="1122" y="227" width="3" height="2" fill="#50c38c"/>
<rect x="1128" y="197" width="1" height="26" fill="#f0505e"/>
<rect x="1127" y="198" width="3" height="21" fill="#f0505e"/>
<rect x="1133" y="184" width="1" height="14" fill="#f0505e"/>
<rect x="1132" y="190" width="3" height="8" fill="#f0505e"/>
<rect x="1138" y="172" width="1" height="19" fill="#f0505e"/>
<rect x="1137" y="174" width="3" height="16" fill="#f0505e"/>
<rect x="1143" y="170" width="1" height="37" fill="#50c38c"/>
<rect x="1142" y="174" width="3" height="30" fill="#50c38c"/>
<rect x="1148" y="201" width="1" height="31" fill="#50c38c"/>
<rect x="1147" y="204" width="3" height="27" fill="#50c38c"/>
<rect x="1153" y="217" width="1" height="14" fill="#f0505e"/>
<rect x="1152" y="219" width="3" height="12" fill="#f0505e"/>
<rect x="1158" y="157" width="1" height="51" fill="#f0505e"/>
<rect x="1157" y="168" width="3" height="35" fill="#f0505e"/>
<rect x="1163" y="153" width="1" height="20" fill="#f0505e"/>
<rect x="1162" y="158" width="3" height="11" fill="#f0505e"/>
<rect x="1168" y="144" width="1" height="16" fill="#f0505e"/>
<rect x="1167" y="148" width="3" height="10" fill="#f0505e"/>
<rect x="1173" y="144" width="1" height="30" fill="#f0505e"/>
<rect x="1172" y="146" width="3" height="2" fill="#f0505e"/>
<rect x="1178" y="135" width="1" height="14" fill="#f0505e"/>
<rect x="1177" y="139" width="3" height="8" fill="#f0505e"/>
<rect x="1183" y="137" width="1" height="10" fill="#f0505e"/>
<rect x="1182" y="138" width="3" height="1" fill="#f0505e"/>
<rect x="1188" y="128" width="1" height="24" fill="#f0505e"/>
<rect x="1187" y="134" width="3" height="4" fill="#f0505e"/>
<rect x="1193" y="120" width="1" height="17" fill="#f0505e"/>
<rect x="1192" y="127" width="3" height="7" fill="#f0505e"/>
<rect x="1198" y="119" width="1" height="22" fill="#50c38c"/>
<rect x="1197" y="127" width="3" height="7" fill="#50c38c"/>
<rect x="1203" y="109" width="1" height="28" fill="#f0505e"/>
<rect x="1202" y="112" width="3" height="24" fill="#f0505e"/>
<rect x="1208" y="106" width="1" height="21" fill="#f0505e"/>
<rect x="1207" y="111" width="3" height="1" fill="#f0505e"/>
<rect x="1213" y="104" width="1" height="13" fill="#f0505e"/>
<rect x="1212" y="107" width="3" height="3" fill="#f0505e"/>
<rect x="1218" y="102" width="1" height="28" fill="#50c38c"/>
<rect x="1217" y="105" width="3" height="15" fill="#50c38c"/>
<rect x="1223" y="115" width="1" height="27" fill="#50c38c"/>
<rect x="1222" y="120" width="3" height="21" fill="#50c38c"/>
<rect x="1228" y="119" width="1" height="23" fill="#f0505e"/>
<rect x="1227" y="129" width="3" height="13" fill="#f0505e"/>
<polyline points="93.4,317.0 98.4,311.2 103.4,305.4 108.4,302.6 113.4,300.1 118.4,297.5 123.4,293.0 128.4,289.8 133.4,289.1 138.4,289.8 143.4,287.2 148.4,286.0 153.4,285.0 158.4,283.2 163.4,280.3 168.4,277.4 173.4,275.3 178.4,273.4 183.4,271.5 188.4,269.5 193.4,267.8 198.4,266.2 203.4,268.2 208.4,270.3 213.4,275.6 218.4,285.4 223.4,299.3 228.4,309.7 233.4,315.6 238.4,323.7 243.4,339.4 248.4,348.0 253.4,360.8 258.4,361.1 263.4,363.1 268.4,364.1 273.4,364.9 278.4,363.2 283.4,363.3 288.4,363.3 293.4,363.3 298.4,362.8 303.4,364.3 308.4,367.9 313.4,367.8 318.4,367.8 323.4,367.4 328.4,367.3 333.4,367.7 338.4,368.4 343.4,366.2 348.4,364.6 353.4,354.6 358.4,347.7 363.4,343.7 368.4,340.3 373.4,336.0 378.4,333.2 383.4,326.1 388.4,321.4 393.4,316.5 398.4,316.3 403.4,314.4 408.4,311.1 413.4,309.8 418.4,309.1 423.4,312.3 428.4,316.9 433.4,322.4 438.4,327.6 443.4,322.9 448.4,319.5 453.4,318.9 458.4,311.3 463.4,304.0 468.4,298.5 473.4,289.2 478.4,283.1 483.4,273.8 488.4,268.7 493.4,264.0 498.4,261.7 503.4,260.1 508.4,259.4 513.4,260.8 518.4,260.6 523.4,261.9 528.4,263.7 533.4,264.6 538.4,267.4 543.4,267.7 548.4,268.4 553.4,271.9 558.4,271.8 563.4,271.8 568.4,271.6 573.4,273.9 578.4,276.0 583.4,281.8 588.4,285.1 593.4,289.4 598.4,291.0 603.4,290.7 608.4,286.1 613.4,286.6 618.4,287.3 623.4,287.6 628.4,287.0 633.4,288.8 638.4,288.8 643.4,288.3 648.4,288.5 653.4,288.3 658.4,287.3 663.4,287.1 668.4,287.0 673.4,286.7 678.4,286.6 683.4,286.1 688.4,286.2 693.4,286.2 698.4,287.9 703.4,289.7 708.4,293.2 713.4,291.6 718.4,290.7 723.4,290.0 728.4,287.8 733.4,277.3 738.4,266.6 743.4,260.2 748.4,253.5 753.4,238.1 758.4,223.2 763.4,218.4 768.4,213.5 773.4,205.9 778.4,197.1 783.4,190.0 788.4,186.2 793.4,185.2 798.4,186.1 803.4,189.1 808.4,190.1 813.4,192.3 818.4,194.1 823.4,198.5 828.4,203.1 833.4,203.7 838.4,202.8 843.4,203.8 848.4,203.0 853.4,202.4 858.4,203.6 863.4,202.7 868.4,201.5 873.4,201.7 878.4,203.4 883.4,204.2 888.4,203.4 893.4,203.3 898.4,202.9 903.4,203.4 908.4,204.5 913.4,207.2 918.4,206.4 923.4,196.6 928.4,181.7 933.4,172.9 938.4,163.5 943.4,153.0 948.4,142.4 953.4,124.0 958.4,111.4 963.4,100.4 968.4,95.7 973.4,87.7 978.4,80.7 983.4,75.9 988.4,70.3 993.4,67.8 998.4,68.8 1003.4,69.9 1008.4,69.9 1013.4,70.0 1018.4,75.0 1023.4,74.8 1028.4,71.1 1033.4,69.8 1038.4,71.4 1043.4,73.9 1048.4,75.3 1053.4,60.2 1058.4,46.9 1063.4,39.1 1068.4,35.8 1073.4,34.8 1078.4,35.9 1083.4,36.2 1088.4,38.5 1093.4,40.0 1098.4,41.1 1103.4,43.3 1108.4,48.4 1113.4,57.3 1118.4,67.1 1123.4,80.1 1128.4,97.6 1133.4,119.0 1138.4,138.6 1143.4,155.4 1148.4,173.3 1153.4,174.1 1158.4,167.5 1163.4,159.4 1168.4,150.4 1173.4,142.5 1178.4,134.5 1183.4,126.6 1188.4,118.4 1193.4,109.8 1198.4,103.6 1203.4,94.6 1208.4,88.7 1213.4,81.1 1218.4,79.2 1223.4,81.5 1228.4,80.1" fill="none" stroke="#e6e01a" stroke-width="1"/>
<polyline points="93.4,389.2 98.4,384.1 103.4,379.0 108.4,373.1 113.4,365.7 118.4,358.2 123.4,352.7 128.4,347.6 133.4,343.4 138.4,340.9 143.4,338.4 148.4,335.8 153.4,335.4 158.4,336.6 163.4,337.9 168.4,339.1 173.4,340.3 178.4,341.6 183.4,343.3 188.4,346.3 193.4,349.5 198.4,353.0 203.4,359.5 208.4,366.4 213.4,371.4 218.4,376.5 223.4,381.8 228.4,386.2 233.4,389.0 238.4,391.8 243.4,395.2 248.4,396.8 253.4,399.6 258.4,399.8 263.4,400.8 268.4,401.4 273.4,402.2 278.4,401.2 283.4,401.4 288.4,401.4 293.4,401.6 298.4,402.0 303.4,401.3 308.4,399.1 313.4,397.7 318.4,397.7 323.4,398.7 328.4,399.2 333.4,399.6 338.4,399.9 343.4,399.5 348.4,399.2 353.4,397.0 358.4,394.8 363.4,392.8 368.4,390.9 373.4,388.3 378.4,387.0 383.4,383.5 388.4,381.0 393.4,377.4 398.4,373.6 403.4,369.2 408.4,366.0 413.4,363.8 418.4,360.6 423.4,356.7 428.4,353.3 433.4,350.0 438.4,347.4 443.4,345.0 448.4,343.3 453.4,342.9 458.4,340.6 463.4,337.3 468.4,334.0 473.4,330.3 478.4,326.6 483.4,323.3 488.4,320.2 493.4,317.4 498.4,314.3 503.4,312.3 508.4,310.6 513.4,309.2 518.4,307.0 523.4,305.8 528.4,304.0 533.4,301.7 538.4,299.9 543.4,299.5 548.4,298.5 553.4,297.4 558.4,297.6 563.4,298.3 568.4,299.2 573.4,300.8 578.4,302.0 583.4,303.6 588.4,304.7 593.4,305.9 598.4,306.2 603.4,306.2 608.4,305.1 613.4,304.4 618.4,305.2 623.4,304.6 628.4,304.2 633.4,305.0 638.4,305.4 643.4,305.8 648.4,306.6 653.4,306.9 658.4,307.7 663.4,307.6 668.4,307.0 673.4,306.6 678.4,306.4 683.4,306.1 688.4,306.2 693.4,306.6 698.4,307.7 703.4,308.7 708.4,309.3 713.4,308.8 718.4,308.2 723.4,307.9 728.4,307.4 733.4,305.1 738.4,302.2 743.4,299.3 748.4,296.3 753.4,291.4 758.4,285.5 763.4,282.4 768.4,279.2 773.4,275.1 778.4,270.4 783.4,266.1 788.4,262.0 793.4,257.9 798.4,254.0 803.4,250.7 808.4,248.6 813.4,246.7 818.4,242.9 823.4,239.7 828.4,237.2 833.4,235.7 838.4,234.1 843.4,232.5 848.4,230.5 853.4,230.2 858.4,230.6 863.4,229.2 868.4,228.1 873.4,228.2 878.4,228.7 883.4,229.0 888.4,228.6 893.4,228.5 898.4,227.7 903.4,226.3 908.4,224.8 913.4,222.3 918.4,221.8 923.4,219.2 928.4,215.2 933.4,211.9 938.4,208.8 943.4,204.7 948.4,201.0 953.4,195.5 958.4,190.6 963.4,185.4 968.4,181.5 973.4,176.0 978.4,170.6 983.4,165.6 988.4,160.0 993.4,154.1 998.4,149.3 1003.4,144.1 1008.4,138.0 1013.4,132.3 1018.4,126.2 1023.4,121.5 1028.4,117.6 1033.4,113.3 1038.4,110.1 1043.4,108.7 1048.4,108.1 1053.4,112.7 1058.4,118.0 1063.4,123.2 1068.4,126.1 1073.4,130.1 1078.4,133.6 1083.4,137.4 1088.4,141.9 1093.4,147.2 1098.4,151.2 1103.4,156.4 1108.4,163.5 1113.4,169.2 1118.4,176.0 1123.4,183.0 1128.4,188.9 1133.4,194.4 1138.4,198.4 1143.4,202.5 1148.4,207.6 1153.4,208.5 1158.4,205.9 1163.4,202.9 1168.4,200.4 1173.4,197.9 1178.4,195.7 1183.4,192.9 1188.4,189.7 1193.4,185.3 1198.4,181.7 1203.4,176.2 1208.4,169.9 1213.4,164.7 1218.4,159.3 1223.4,154.9 1228.4,151.5" fill="none" stroke="#e8e8e8" stroke-width="1"/>
<polyline points="93.4,462.8 98.4,457.0 103.4,451.2 108.4,439.6 113.4,427.7 118.4,418.5 123.4,412.9 128.4,407.3 133.4,400.7 138.4,394.2 143.4,391.7 148.4,389.2 153.4,386.7 158.4,391.8 163.4,397.6 168.4,402.6 173.4,407.6 178.4,412.6 183.4,418.1 188.4,425.1 193.4,431.9 198.4,439.7 203.4,450.6 208.4,462.4 213.4,467.2 218.4,467.6 223.4,464.3 228.4,462.6 233.4,462.4 238.4,459.9 243.4,450.9 248.4,445.7 253.4,438.4 258.4,438.4 263.4,438.5 268.4,438.8 273.4,439.4 278.4,439.2 283.4,439.6 288.4,439.5 293.4,439.9 298.4,441.2 303.4,438.3 308.4,430.3 313.4,427.7 318.4,427.7 323.4,430.1 328.4,431.1 333.4,431.6 338.4,431.5 343.4,432.7 348.4,433.8 353.4,439.4 358.4,441.9 363.4,441.9 368.4,441.4 373.4,440.5 378.4,440.8 383.4,440.9 388.4,440.5 393.4,438.2 398.4,430.9 403.4,424.0 408.4,420.9 413.4,417.9 418.4,412.2 423.4,401.2 428.4,389.6 433.4,377.6 438.4,367.2 443.4,367.2 448.4,367.1 453.4,367.0 458.4,369.9 463.4,370.6 468.4,369.5 473.4,371.4 478.4,370.0 483.4,372.8 488.4,371.7 493.4,370.9 498.4,366.8 503.4,364.6 508.4,361.9 513.4,357.5 518.4,353.5 523.4,349.8 528.4,344.4 533.4,338.8 538.4,332.5 543.4,331.4 548.4,328.6 553.4,322.9 558.4,323.5 563.4,324.7 568.4,326.9 573.4,327.6 578.4,328.1 583.4,325.5 588.4,324.3 593.4,322.4 598.4,321.5 603.4,321.6 608.4,324.1 613.4,322.2 618.4,323.1 623.4,321.6 628.4,321.4 633.4,321.3 638.4,322.0 643.4,323.3 648.4,324.6 653.4,325.4 658.4,328.1 663.4,328.0 668.4,327.0 673.4,326.5 678.4,326.2 683.4,326.2 688.4,326.2 693.4,327.0 698.4,327.5 703.4,327.7 708.4,325.4 713.4,326.0 718.4,325.6 723.4,325.7 728.4,326.9 733.4,332.9 738.4,337.8 743.4,338.5 748.4,339.1 753.4,344.7 758.4,347.9 763.4,346.4 768.4,344.8 773.4,344.2 778.4,343.6 783.4,342.2 788.4,337.9 793.4,330.6 798.4,321.9 803.4,312.4 808.4,307.1 813.4,301.2 818.4,291.7 823.4,280.8 828.4,271.4 833.4,267.7 838.4,265.3 843.4,261.1 848.4,257.9 853.4,258.1 858.4,257.5 863.4,255.8 868.4,254.6 873.4,254.6 878.4,254.1 883.4,253.8 888.4,253.9 893.4,253.7 898.4,252.6 903.4,249.3 908.4,245.2 913.4,237.5 918.4,237.3 923.4,241.9 928.4,248.7 933.4,250.9 938.4,254.0 943.4,256.4 948.4,259.6 953.4,267.0 958.4,269.8 963.4,270.3 968.4,267.4 973.4,264.3 978.4,260.4 983.4,255.2 988.4,249.8 993.4,240.3 998.4,229.8 1003.4,218.3 1008.4,206.1 1013.4,194.6 1018.4,177.4 1023.4,168.2 1028.4,164.2 1033.4,156.9 1038.4,148.7 1043.4,143.5 1048.4,140.9 1053.4,165.3 1058.4,189.0 1063.4,207.3 1068.4,216.4 1073.4,225.4 1078.4,231.4 1083.4,238.6 1088.4,245.4 1093.4,254.4 1098.4,261.3 1103.4,269.6 1108.4,278.5 1113.4,281.1 1118.4,284.8 1123.4,286.0 1128.4,280.1 1133.4,269.7 1138.4,258.1 1143.4,249.7 1148.4,241.9 1153.4,243.0 1158.4,244.4 1163.4,246.4 1168.4,250.4 1173.4,253.4 1178.4,256.9 1183.4,259.2 1188.4,261.1 1193.4,260.9 1198.4,259.7 1203.4,257.7 1208.4,251.0 1213.4,248.3 1218.4,239.5 1223.4,228.4 1228.4,222.9" fill="none" stroke="#d030e0" stroke-width="1"/>
<polyline points="93.4,434.3 98.4,432.4 103.4,430.5 108.4,427.0 113.4,423.3 118.4,419.6 123.4,416.4 128.4,413.2 133.4,410.1 138.4,408.4 143.4,407.4 148.4,406.5 153.4,405.5 158.4,404.5 163.4,403.5 168.4,402.4 173.4,401.8 178.4,401.2 183.4,400.7 188.4,400.1 193.4,399.6 198.4,399.1 203.4,399.3 208.4,399.3 213.4,398.7 218.4,398.0 223.4,397.3 228.4,395.9 233.4,394.4 238.4,392.9 243.4,391.4 248.4,389.9 253.4,388.4 258.4,387.1 263.4,385.8 268.4,384.6 273.4,383.6 278.4,382.8 283.4,382.1 288.4,381.3 293.4,380.5 298.4,379.8 303.4,379.0 308.4,378.2 313.4,377.7 318.4,377.6 323.4,377.6 328.4,377.5 333.4,377.5 338.4,377.4 343.4,377.4 348.4,377.3 353.4,377.3 358.4,377.3 363.4,377.3 368.4,377.2 373.4,377.2 378.4,376.9 383.4,376.4 388.4,375.9 393.4,375.4 398.4,375.4 403.4,375.9 408.4,376.5 413.4,377.1 418.4,377.8 423.4,378.6 428.4,379.2 433.4,379.2 438.4,379.2 443.4,379.3 448.4,379.3 453.4,379.3 458.4,378.0 463.4,376.2 468.4,374.5 473.4,372.6 478.4,370.7 483.4,368.8 488.4,366.9 493.4,364.9 498.4,362.9 503.4,360.8 508.4,358.6 513.4,356.9 518.4,355.1 523.4,353.6 528.4,352.0 533.4,350.2 538.4,348.8 543.4,347.7 548.4,346.7 553.4,345.5 558.4,344.1 563.4,342.6 568.4,341.2 573.4,339.7 578.4,338.5 583.4,336.8 588.4,335.3 593.4,333.6 598.4,331.4 603.4,329.2 608.4,327.3 613.4,325.8 618.4,324.3 623.4,322.4 628.4,320.5 633.4,318.9 638.4,317.6 643.4,316.8 648.4,316.2 653.4,315.7 658.4,315.3 663.4,314.4 668.4,313.4 673.4,312.6 678.4,311.7 683.4,311.0 688.4,310.4 693.4,310.0 698.4,309.4 703.4,309.1 708.4,308.3 713.4,307.4 718.4,306.8 723.4,306.1 728.4,305.2 733.4,303.9 738.4,302.5 743.4,301.6 748.4,300.5 753.4,298.5 758.4,296.9 763.4,296.1 768.4,295.1 773.4,294.2 778.4,292.9 783.4,291.9 788.4,291.0 793.4,290.1 798.4,289.3 803.4,288.5 808.4,287.7 813.4,286.6 818.4,285.4 823.4,284.1 828.4,282.9 833.4,281.9 838.4,280.6 843.4,279.2 848.4,277.8 853.4,276.2 858.4,274.6 863.4,273.1 868.4,271.4 873.4,270.0 878.4,268.5 883.4,267.1 888.4,265.6 893.4,264.3 898.4,263.2 903.4,261.9 908.4,260.9 913.4,259.3 918.4,257.6 923.4,255.6 928.4,253.3 933.4,250.9 938.4,248.3 943.4,245.5 948.4,242.6 953.4,239.1 958.4,235.6 963.4,232.3 968.4,229.6 973.4,226.4 978.4,223.2 983.4,220.2 988.4,216.9 993.4,213.5 998.4,210.4 1003.4,207.1 1008.4,203.8 1013.4,200.5 1018.4,197.0 1023.4,193.5 1028.4,190.0 1033.4,187.0 1038.4,184.3 1043.4,181.9 1048.4,179.9 1053.4,179.5 1058.4,179.7 1063.4,179.3 1068.4,178.6 1073.4,178.1 1078.4,177.6 1083.4,177.3 1088.4,176.9 1093.4,176.6 1098.4,176.1 1103.4,175.6 1108.4,175.4 1113.4,174.6 1118.4,174.7 1123.4,174.6 1128.4,173.9 1133.4,173.2 1138.4,172.4 1143.4,172.0 1148.4,172.2 1153.4,172.3 1158.4,171.5 1163.4,170.5 1168.4,169.3 1173.4,168.0 1178.4,166.6 1183.4,165.3 1188.4,163.9 1193.4,162.2 1198.4,160.7 1203.4,158.9 1208.4,157.1 1213.4,155.4 1218.4,153.8 1223.4,153.2 1228.4,152.7" fill="none" stroke="#20d020" stroke-width="1"/>
<rect x="93" y="574" width="1" height="4" fill="#f0505e"/>
<rect x="98" y="575" width="1" height="3" fill="#f0505e"/>
<rect x="103" y="562" width="1" height="16" fill="#f0505e"/>
<rect x="108" y="558" width="1" height="20" fill="#f0505e"/>
<rect x="113" y="559" width="1" height="19" fill="#f0505e"/>
<rect x="118" y="557" width="1" height="21" fill="#f0505e"/>
<rect x="123" y="555" width="1" height="23" fill="#f0505e"/>
<rect x="128" y="562" width="1" height="16" fill="#f0505e"/>
<rect x="133" y="577" width="1" height="1" fill="#f0505e"/>
<rect x="138" y="578" width="1" height="7" fill="#50c38c"/>
<rect x="143" y="578" width="1" height="5" fill="#50c38c"/>
<rect x="148" y="578" width="1" height="11" fill="#50c38c"/>
<rect x="153" y="578" width="1" height="17" fill="#50c38c"/>
<rect x="158" y="578" width="1" height="39" fill="#50c38c"/>
<rect x="163" y="578" width="1" height="49" fill="#50c38c"/>
<rect x="168" y="578" width="1" height="56" fill="#50c38c"/>
<rect x="173" y="578" width="1" height="59" fill="#50c38c"/>
<rect x="178" y="578" width="1" height="62" fill="#50c38c"/>
<rect x="183" y="578" width="1" height="60" fill="#50c38c"/>
<rect x="188" y="578" width="1" height="55" fill="#50c38c"/>
<rect x="193" y="578" width="1" height="52" fill="#50c38c"/>
<rect x="198" y="578" width="1" height="51" fill="#50c38c"/>
<rect x="203" y="578" width="1" height="53" fill="#50c38c"/>
<rect x="208" y="578" width="1" height="54" fill="#50c38c"/>
<rect x="213" y="578" width="1" height="44" fill="#50c38c"/>
<rect x="218" y="578" width="1" height="30" fill="#50c38c"/>
<rect x="223" y="578" width="1" height="18" fill="#50c38c"/>
<rect x="228" y="578" width="1" height="10" fill="#50c38c"/>
<rect x="233" y="578" width="1" height="3" fill="#50c38c"/>
<rect x="238" y="572" width="1" height="6" fill="#f0505e"/>
<rect x="243" y="563" width="1" height="15" fill="#f0505e"/>
<rect x="248" y="553" width="1" height="25" fill="#f0505e"/>
<rect x="253" y="556" width="1" height="22" fill="#f0505e"/>
<rect x="258" y="561" width="1" height="17" fill="#f0505e"/>
<rect x="263" y="568" width="1" height="10" fill="#f0505e"/>
<rect x="268" y="571" width="1" height="7" fill="#f0505e"/>
<rect x="273" y="576" width="1" height="2" fill="#f0505e"/>
<rect x="278" y="571" width="1" height="7" fill="#f0505e"/>
<rect x="283" y="575" width="1" height="3" fill="#f0505e"/>
<rect x="288" y="574" width="1" height="4" fill="#f0505e"/>
<rect x="293" y="578" width="1" height="1" fill="#50c38c"/>
<rect x="298" y="578" width="1" height="7" fill="#50c38c"/>
<rect x="303" y="578" width="1" height="10" fill="#50c38c"/>
<rect x="308" y="578" width="1" height="3" fill="#50c38c"/>
<rect x="313" y="575" width="1" height="3" fill="#f0505e"/>
<rect x="318" y="574" width="1" height="4" fill="#f0505e"/>
<rect x="323" y="578" width="1" height="1" fill="#50c38c"/>
<rect x="328" y="578" width="1" height="1" fill="#50c38c"/>
<rect x="333" y="576" width="1" height="2" fill="#f0505e"/>
<rect x="338" y="570" width="1" height="8" fill="#f0505e"/>
<rect x="343" y="559" width="1" height="19" fill="#f0505e"/>
<rect x="348" y="550" width="1" height="28" fill="#f0505e"/>
<rect x="353" y="542" width="1" height="36" fill="#f0505e"/>
<rect x="358" y="541" width="1" height="37" fill="#f0505e"/>
<rect x="363" y="545" width="1" height="33" fill="#f0505e"/>
<rect x="368" y="551" width="1" height="27" fill="#f0505e"/>
<rect x="373" y="553" width="1" height="25" fill="#f0505e"/>
<rect x="378" y="557" width="1" height="21" fill="#f0505e"/>
<rect x="383" y="554" width="1" height="24" fill="#f0505e"/>
<rect x="388" y="556" width="1" height="22" fill="#f0505e"/>
<rect x="393" y="557" width="1" height="21" fill="#f0505e"/>
<rect x="398" y="563" width="1" height="15" fill="#f0505e"/>
<rect x="403" y="563" width="1" height="15" fill="#f0505e"/>
<rect x="408" y="565" width="1" height="13" fill="#f0505e"/>
<rect x="413" y="571" width="1" height="7" fill="#f0505e"/>
<rect x="418" y="573" width="1" height="5" fill="#f0505e"/>
<rect x="423" y="575" width="1" height="3" fill="#f0505e"/>
<rect x="428" y="578" width="1" height="1" fill="#50c38c"/>
<rect x="433" y="578" width="1" height="1" fill="#50c38c"/>
<rect x="438" y="578" width="1" height="2" fill="#50c38c"/>
<rect x="443" y="575" width="1" height="3" fill="#f0505e"/>
<rect x="448" y="574" width="1" height="4" fill="#f0505e"/>
<rect x="453" y="578" width="1" height="1" fill="#50c38c"/>
<rect x="458" y="571" width="1" height="7" fill="#f0505e"/>
<rect x="463" y="566" width="1" height="12" fill="#f0505e"/>
<rect x="468" y="564" width="1" height="14" fill="#f0505e"/>
<rect x="473" y="559" width="1" height="19" fill="#f0505e"/>
<rect x="478" y="559" width="1" height="19" fill="#f0505e"/>
<rect x="483" y="556" width="1" height="22" fill="#f0505e"/>
<rect x="488" y="560" width="1" height="18" fill="#f0505e"/>
<rect x="493" y="564" width="1" height="14" fill="#f0505e"/>
<rect x="498" y="569" width="1" height="9" fill="#f0505e"/>
<rect x="503" y="577" width="1" height="1" fill="#f0505e"/>
<rect x="508" y="578" width="1" height="6" fill="#50c38c"/>
<rect x="513" y="578" width="1" height="16" fill="#50c38c"/>
<rect x="518" y="578" width="1" height="16" fill="#50c38c"/>
<rect x="523" y="578" width="1" height="22" fill="#50c38c"/>
<rect x="528" y="578" width="1" height="22" fill="#50c38c"/>
<rect x="533" y="578" width="1" height="17" fill="#50c38c"/>
<rect x="538" y="578" width="1" height="17" fill="#50c38c"/>
<rect x="543" y="578" width="1" height="19" fill="#50c38c"/>
<rect x="548" y="578" width="1" height="17" fill="#50c38c"/>
<rect x="553" y="578" width="1" height="19" fill="#50c38c"/>
<rect x="558" y="578" width="1" height="18" fill="#50c38c"/>
<rect x="563" y="578" width="1" height="17" fill="#50c38c"/>
<rect x="568" y="578" width="1" height="18" fill="#50c38c"/>
<rect x="573" y="578" width="1" height="17" fill="#50c38c"/>
<rect x="578" y="578" width="1" height="15" fill="#50c38c"/>
<rect x="583" y="578" width="1" height="11" fill="#50c38c"/>
<rect x="588" y="578" width="1" height="9" fill="#50c38c"/>
<rect x="593" y="578" width="1" height="7" fill="#50c38c"/>
<rect x="598" y="578" width="1" height="2" fill="#50c38c"/>
<rect x="603" y="578" width="1" height="1" fill="#50c38c"/>
<rect x="608" y="572" width="1" height="6" fill="#f0505e"/>
<rect x="613" y="576" width="1" height="2" fill="#f0505e"/>
<rect x="618" y="578" width="1" height="4" fill="#50c38c"/>
<rect x="623" y="578" width="1" height="4" fill="#50c38c"/>
<rect x="628" y="578" width="1" height="3" fill="#50c38c"/>
<rect x="633" y="578" width="1" height="5" fill="#50c38c"/>
<rect x="638" y="578" width="1" height="7" fill="#50c38c"/>
<rect x="643" y="578" width="1" height="11" fill="#50c38c"/>
<rect x="648" y="578" width="1" height="11" fill="#50c38c"/>
<rect x="653" y="578" width="1" height="12" fill="#50c38c"/>
<rect x="658" y="578" width="1" height="14" fill="#50c38c"/>
<rect x="663" y="578" width="1" height="9" fill="#50c38c"/>
<rect x="668" y="578" width="1" height="5" fill="#50c38c"/>
<rect x="673" y="578" width="1" height="1" fill="#50c38c"/>
<rect x="678" y="578" width="1" height="1" fill="#50c38c"/>
<rect x="683" y="575" width="1" height="3" fill="#f0505e"/>
<rect x="688" y="575" width="1" height="3" fill="#f0505e"/>
<rect x="693" y="578" width="1" height="1" fill="#50c38c"/>
<rect x="698" y="578" width="1" height="2" fill="#50c38c"/>
<rect x="703" y="578" width="1" height="3" fill="#50c38c"/>
<rect x="708" y="574" width="1" height="4" fill="#f0505e"/>
<rect x="713" y="571" width="1" height="7" fill="#f0505e"/>
<rect x="718" y="572" width="1" height="6" fill="#f0505e"/>
<rect x="723" y="572" width="1" height="6" fill="#f0505e"/>
<rect x="728" y="569" width="1" height="9" fill="#f0505e"/>
<rect x="733" y="560" width="1" height="18" fill="#f0505e"/>
<rect x="738" y="552" width="1" height="26" fill="#f0505e"/>
<rect x="743" y="551" width="1" height="27" fill="#f0505e"/>
<rect x="748" y="551" width="1" height="27" fill="#f0505e"/>
<rect x="753" y="541" width="1" height="37" fill="#f0505e"/>
<rect x="758" y="534" width="1" height="44" fill="#f0505e"/>
<rect x="763" y="543" width="1" height="35" fill="#f0505e"/>
<rect x="768" y="550" width="1" height="28" fill="#f0505e"/>
<rect x="773" y="551" width="1" height="27" fill="#f0505e"/>
<rect x="778" y="550" width="1" height="28" fill="#f0505e"/>
<rect x="783" y="552" width="1" height="26" fill="#f0505e"/>
<rect x="788" y="559" width="1" height="19" fill="#f0505e"/>
<rect x="793" y="568" width="1" height="10" fill="#f0505e"/>
<rect x="798" y="576" width="1" height="2" fill="#f0505e"/>
<rect x="803" y="578" width="1" height="8" fill="#50c38c"/>
<rect x="808" y="578" width="1" height="14" fill="#50c38c"/>
<rect x="813" y="578" width="1" height="21" fill="#50c38c"/>
<rect x="818" y="578" width="1" height="15" fill="#50c38c"/>
<rect x="823" y="578" width="1" height="13" fill="#50c38c"/>
<rect x="828" y="578" width="1" height="14" fill="#50c38c"/>
<rect x="833" y="578" width="1" height="13" fill="#50c38c"/>
<rect x="838" y="578" width="1" height="8" fill="#50c38c"/>
<rect x="843" y="578" width="1" height="8" fill="#50c38c"/>
<rect x="848" y="578" width="1" height="4" fill="#50c38c"/>
<rect x="853" y="578" width="1" height="2" fill="#50c38c"/>
<rect x="858" y="578" width="1" height="1" fill="#50c38c"/>
<rect x="863" y="578" width="1" height="1" fill="#50c38c"/>
<rect x="868" y="578" width="1" height="2" fill="#50c38c"/>
<rect x="873" y="578" width="1" height="5" fill="#50c38c"/>
<rect x="878" y="578" width="1" height="6" fill="#50c38c"/>
<rect x="883" y="578" width="1" height="6" fill="#50c38c"/>
<rect x="888" y="578" width="1" height="6" fill="#50c38c"/>
<rect x="893" y="578" width="1" height="10" fill="#50c38c"/>
<rect x="898" y="578" width="1" height="10" fill="#50c38c"/>
<rect x="903" y="578" width="1" height="10" fill="#50c38c"/>
<rect x="908" y="578" width="1" height="9" fill="#50c38c"/>
<rect x="913" y="578" width="1" height="4" fill="#50c38c"/>
<rect x="918" y="578" width="1" height="4" fill="#50c38c"/>
<rect x="923" y="572" width="1" height="6" fill="#f0505e"/>
<rect x="928" y="559" width="1" height="19" fill="#f0505e"/>
<rect x="933" y="555" width="1" height="23" fill="#f0505e"/>
<rect x="938" y="552" width="1" height="26" fill="#f0505e"/>
<rect x="943" y="548" width="1" height="30" fill="#f0505e"/>
<rect x="948" y="546" width="1" height="32" fill="#f0505e"/>
<rect x="953" y="537" width="1" height="41" fill="#f0505e"/>
<rect x="958" y="537" width="1" height="41" fill="#f0505e"/>
<rect x="963" y="539" width="1" height="39" fill="#f0505e"/>
<rect x="968" y="551" width="1" height="27" fill="#f0505e"/>
<rect x="973" y="554" width="1" height="24" fill="#f0505e"/>
<rect x="978" y="557" width="1" height="21" fill="#f0505e"/>
<rect x="983" y="563" width="1" height="15" fill="#f0505e"/>
<rect x="988" y="565" width="1" height="13" fill="#f0505e"/>
<rect x="993" y="569" width="1" height="9" fill="#f0505e"/>
<rect x="998" y="578" width="1" height="1" fill="#50c38c"/>
<rect x="1003" y="578" width="1" height="5" fill="#50c38c"/>
<rect x="1008" y="578" width="1" height="2" fill="#50c38c"/>
<rect x="1013" y="578" width="1" height="1" fill="#50c38c"/>
<rect x="1018" y="578" width="1" height="1" fill="#50c38c"/>
<rect x="1023" y="578" width="1" height="1" fill="#50c38c"/>
<rect x="1028" y="577" width="1" height="1" fill="#f0505e"/>
<rect x="1033" y="577" width="1" height="1" fill="#f0505e"/>
<rect x="1038" y="578" width="1" height="4" fill="#50c38c"/>
<rect x="1043" y="578" width="1" height="17" fill="#50c38c"/>
<rect x="1048" y="578" width="1" height="28" fill="#50c38c"/>
<rect x="1053" y="578" width="1" height="55" fill="#50c38c"/>
<rect x="1058" y="578" width="1" height="77" fill="#50c38c"/>
<rect x="1063" y="578" width="1" height="87" fill="#50c38c"/>
<rect x="1068" y="578" width="1" height="83" fill="#50c38c"/>
<rect x="1073" y="578" width="1" height="75" fill="#50c38c"/>
<rect x="1078" y="578" width="1" height="63" fill="#50c38c"/>
<rect x="1083" y="578" width="1" height="56" fill="#50c38c"/>
<rect x="1088" y="578" width="1" height="49" fill="#50c38c"/>
<rect x="1093" y="578" width="1" height="47" fill="#50c38c"/>
<rect x="1098" y="578" width="1" height="41" fill="#50c38c"/>
<rect x="1103" y="578" width="1" height="39" fill="#50c38c"/>
<rect x="1108" y="578" width="1" height="40" fill="#50c38c"/>
<rect x="1113" y="578" width="1" height="29" fill="#50c38c"/>
<rect x="1118" y="578" width="1" height="26" fill="#50c38c"/>
<rect x="1123" y="578" width="1" height="22" fill="#50c38c"/>
<rect x="1128" y="578" width="1" height="9" fill="#50c38c"/>
<rect x="1133" y="574" width="1" height="4" fill="#f0505e"/>
<rect x="1138" y="561" width="1" height="17" fill="#f0505e"/>
<rect x="1143" y="562" width="1" height="16" fill="#f0505e"/>
<rect x="1148" y="571" width="1" height="7" fill="#f0505e"/>
<rect x="1153" y="573" width="1" height="5" fill="#f0505e"/>
<rect x="1158" y="558" width="1" height="20" fill="#f0505e"/>
<rect x="1163" y="546" width="1" height="32" fill="#f0505e"/>
<rect x="1168" y="536" width="1" height="42" fill="#f0505e"/>
<rect x="1173" y="532" width="1" height="46" fill="#f0505e"/>
<rect x="1178" y="529" width="1" height="49" fill="#f0505e"/>
<rect x="1183" y="529" width="1" height="49" fill="#f0505e"/>
<rect x="1188" y="530" width="1" height="48" fill="#f0505e"/>
<rect x="1193" y="531" width="1" height="47" fill="#f0505e"/>
<rect x="1198" y="537" width="1" height="41" fill="#f0505e"/>
<rect x="1203" y="535" width="1" height="43" fill="#f0505e"/>
<rect x="1208" y="537" width="1" height="41" fill="#f0505e"/>
<rect x="1213" y="539" width="1" height="39" fill="#f0505e"/>
<rect x="1218" y="547" width="1" height="31" fill="#f0505e"/>
<rect x="1223" y="561" width="1" height="17" fill="#f0505e"/>
<rect x="1228" y="567" width="1" height="11" fill="#f0505e"/>
<polyline points="93.4,522.4 98.4,522.7 103.4,514.2 108.4,509.9 113.4,507.9 118.4,504.3 123.4,500.5 128.4,502.4 133.4,509.7 138.4,514.4 143.4,514.1 148.4,518.8 153.4,524.1 158.4,540.1 163.4,551.0 168.4,561.5 173.4,570.5 178.4,579.8 183.4,586.5 188.4,590.8 193.4,595.7 198.4,601.7 203.4,609.7 208.4,616.8 213.4,617.3 218.4,614.3 223.4,610.6 228.4,607.9 233.4,604.5 238.4,599.4 243.4,592.9 248.4,585.2 253.4,584.2 258.4,584.7 263.4,586.5 268.4,587.6 273.4,589.5 278.4,586.4 283.4,588.1 288.4,587.2 293.4,589.1 298.4,593.6 303.4,596.3 308.4,593.6 313.4,590.0 318.4,589.3 323.4,591.4 328.4,591.6 333.4,590.3 338.4,586.6 343.4,578.5 348.4,570.4 353.4,561.9 358.4,556.8 363.4,555.2 368.4,554.3 373.4,552.5 378.4,552.0 383.4,547.6 388.4,546.1 393.4,543.9 398.4,545.1 403.4,543.3 408.4,542.4 413.4,544.5 418.4,544.9 423.4,545.8 428.4,547.3 433.4,548.1 438.4,549.1 443.4,546.1 448.4,544.9 453.4,547.0 458.4,542.9 463.4,538.8 468.4,536.0 473.4,531.2 478.4,528.7 483.4,524.9 488.4,524.6 493.4,524.8 498.4,526.6 503.4,530.1 508.4,534.6 513.4,541.8 518.4,543.8 523.4,549.4 528.4,552.2 533.4,551.9 538.4,554.4 543.4,557.5 548.4,558.7 553.4,562.0 558.4,564.0 563.4,565.9 568.4,568.8 573.4,570.2 578.4,571.1 583.4,570.7 588.4,570.5 593.4,570.9 598.4,568.8 603.4,567.4 608.4,564.0 613.4,565.8 618.4,569.1 623.4,570.1 628.4,569.9 633.4,571.5 638.4,573.8 643.4,576.6 648.4,578.6 653.4,580.4 658.4,583.2 663.4,581.8 668.4,580.4 673.4,578.9 678.4,578.0 683.4,576.1 688.4,575.9 693.4,577.5 698.4,578.8 703.4,579.7 708.4,576.1 713.4,573.8 718.4,573.3 723.4,572.5 728.4,569.9 733.4,563.1 738.4,556.4 743.4,552.5 748.4,548.8 753.4,539.5 758.4,530.4 763.4,530.7 768.4,530.7 773.4,527.8 778.4,523.8 783.4,521.8 788.4,523.1 793.4,526.0 798.4,530.0 803.4,535.8 808.4,541.0 813.4,546.9 818.4,545.7 823.4,546.8 828.4,549.2 833.4,549.9 838.4,548.9 843.4,549.8 848.4,548.1 853.4,547.3 858.4,546.8 863.4,547.5 868.4,548.0 873.4,550.3 878.4,551.8 883.4,552.7 888.4,553.5 893.4,556.5 898.4,558.0 903.4,559.0 908.4,559.6 913.4,558.1 918.4,558.5 923.4,552.9 928.4,544.3 933.4,539.3 938.4,534.4 943.4,529.1 948.4,524.2 953.4,514.4 958.4,509.1 963.4,505.4 968.4,508.4 973.4,506.5 978.4,505.6 983.4,506.8 988.4,506.3 993.4,507.3 998.4,512.3 1003.4,514.8 1008.4,513.7 1013.4,513.2 1018.4,513.2 1023.4,512.9 1028.4,512.2 1033.4,512.1 1038.4,515.4 1043.4,523.8 1048.4,532.8 1053.4,553.7 1058.4,574.1 1063.4,590.0 1068.4,598.3 1073.4,604.2 1078.4,606.0 1083.4,609.4 1088.4,612.1 1093.4,617.2 1098.4,619.5 1103.4,623.3 1108.4,628.9 1113.4,627.2 1118.4,629.1 1123.4,630.0 1128.4,624.2 1133.4,617.6 1138.4,609.0 1143.4,607.5 1148.4,611.2 1153.4,611.4 1158.4,601.5 1163.4,591.5 1168.4,581.7 1173.4,573.6 1178.4,565.9 1183.4,559.9 1188.4,554.5 1193.4,549.3 1198.4,546.9 1203.4,541.1 1208.4,536.9 1213.4,533.1 1218.4,533.3 1223.4,537.9 1228.4,539.7" fill="none" stroke="#e8e8e8"/>
<polyline points="93.4,524.4 98.4,524.1 103.4,522.1 108.4,519.7 113.4,517.3 118.4,514.7 123.4,511.9 128.4,510.0 133.4,509.9 138.4,510.8 143.4,511.5 148.4,512.9 153.4,515.2 158.4,520.1 163.4,526.3 168.4,533.3 173.4,540.8 178.4,548.6 183.4,556.2 188.4,563.1 193.4,569.6 198.4,576.0 203.4,582.8 208.4,589.6 213.4,595.1 218.4,599.0 223.4,601.3 228.4,602.6 233.4,603.0 238.4,602.3 243.4,600.4 248.4,597.4 253.4,594.7 258.4,592.7 263.4,591.5 268.4,590.7 273.4,590.5 278.4,589.7 283.4,589.4 288.4,588.9 293.4,589.0 298.4,589.9 303.4,591.2 308.4,591.7 313.4,591.3 318.4,590.9 323.4,591.0 328.4,591.2 333.4,591.0 338.4,590.1 343.4,587.8 348.4,584.3 353.4,579.8 358.4,575.2 363.4,571.2 368.4,567.8 373.4,564.8 378.4,562.2 383.4,559.3 388.4,556.7 393.4,554.1 398.4,552.3 403.4,550.5 408.4,548.9 413.4,548.0 418.4,547.4 423.4,547.1 428.4,547.1 433.4,547.3 438.4,547.7 443.4,547.4 448.4,546.9 453.4,546.9 458.4,546.1 463.4,544.6 468.4,542.9 473.4,540.6 478.4,538.2 483.4,535.5 488.4,533.3 493.4,531.6 498.4,530.6 503.4,530.5 508.4,531.3 513.4,533.4 518.4,535.5 523.4,538.3 528.4,541.1 533.4,543.2 538.4,545.5 543.4,547.9 548.4,550.1 553.4,552.4 558.4,554.8 563.4,557.0 568.4,559.3 573.4,561.5 578.4,563.4 583.4,564.9 588.4,566.0 593.4,567.0 598.4,567.4 603.4,567.4 608.4,566.7 613.4,566.5 618.4,567.0 623.4,567.6 628.4,568.1 633.4,568.8 638.4,569.8 643.4,571.1 648.4,572.6 653.4,574.2 658.4,576.0 663.4,577.2 668.4,577.8 673.4,578.0 678.4,578.0 683.4,577.7 688.4,577.3 693.4,577.3 698.4,577.6 703.4,578.0 708.4,577.7 713.4,576.9 718.4,576.2 723.4,575.4 728.4,574.3 733.4,572.1 738.4,568.9 743.4,565.7 748.4,562.3 753.4,557.7 758.4,552.3 763.4,548.0 768.4,544.5 773.4,541.1 778.4,537.7 783.4,534.5 788.4,532.2 793.4,531.0 798.4,530.8 803.4,531.8 808.4,533.6 813.4,536.3 818.4,538.2 823.4,539.9 828.4,541.8 833.4,543.4 838.4,544.5 843.4,545.5 848.4,546.1 853.4,546.3 858.4,546.4 863.4,546.6 868.4,546.9 873.4,547.6 878.4,548.4 883.4,549.3 888.4,550.1 893.4,551.4 898.4,552.7 903.4,554.0 908.4,555.1 913.4,555.7 918.4,556.3 923.4,555.6 928.4,553.3 933.4,550.5 938.4,547.3 943.4,543.6 948.4,539.8 953.4,534.7 958.4,529.6 963.4,524.7 968.4,521.5 973.4,518.5 978.4,515.9 983.4,514.1 988.4,512.5 993.4,511.5 998.4,511.6 1003.4,512.3 1008.4,512.6 1013.4,512.7 1018.4,512.8 1023.4,512.8 1028.4,512.7 1033.4,512.6 1038.4,513.1 1043.4,515.3 1048.4,518.8 1053.4,525.8 1058.4,535.4 1063.4,546.4 1068.4,556.7 1073.4,566.2 1078.4,574.2 1083.4,581.2 1088.4,587.4 1093.4,593.4 1098.4,598.6 1103.4,603.5 1108.4,608.6 1113.4,612.3 1118.4,615.7 1123.4,618.5 1128.4,619.7 1133.4,619.3 1138.4,617.2 1143.4,615.3 1148.4,614.5 1153.4,613.9 1158.4,611.4 1163.4,607.4 1168.4,602.3 1173.4,596.5 1178.4,590.4 1183.4,584.3 1188.4,578.4 1193.4,572.6 1198.4,567.4 1203.4,562.2 1208.4,557.1 1213.4,552.3 1218.4,548.5 1223.4,546.4 1228.4,545.1" fill="none" stroke="#e6e01a"/>
<rect x="126" y="278" width="7" height="1" fill="#e8e8e8"/>
<rect x="128" y="276" width="1" height="5" fill="#e8e8e8"/>
<rect x="211" y="449" width="7" height="1" fill="#e8e8e8"/>
<rect x="213" y="447" width="1" height="5" fill="#e8e8e8"/>
<rect x="1026" y="67" width="7" height="1" fill="#e8e8e8"/>
<rect x="1028" y="65" width="1" height="5" fill="#e8e8e8"/>
<g shape-rendering="auto"><rect x="215" y="2" width="12" height="13" fill="#888"/><rect x="214" y="1" width="12" height="13" fill="#0000a0"/><rect x="215" y="2" width="10" height="11" fill="#fff"/>
<polyline points="215,9 218.5,4.5 221.5,8 224,5.5 225,5.5" fill="none" stroke="#f00000" stroke-width="1.2"/>
<polyline points="215,12 218.5,7.5 221.5,11 224,8.5 225,8.5" fill="none" stroke="#0000f0" stroke-width="1.2"/></g>
<g shape-rendering="auto"><rect x="565" y="2" width="12" height="13" fill="#888"/><rect x="564" y="1" width="12" height="13" fill="#0000a0"/><rect x="565" y="2" width="10" height="11" fill="#fff"/>
<polyline points="565,9 568.5,4.5 571.5,8 574,5.5 575,5.5" fill="none" stroke="#f00000" stroke-width="1.2"/>
<polyline points="565,12 568.5,7.5 571.5,11 574,8.5 575,8.5" fill="none" stroke="#0000f0" stroke-width="1.2"/></g>
<g shape-rendering="auto"><circle cx="202.5" cy="11.5" r="4.3" fill="none" stroke="#ff7a00" stroke-width="1.1"/><line x1="198" y1="11.5" x2="207" y2="11.5" stroke="#ff7a00" stroke-width="1.3"/><line x1="202.5" y1="7" x2="202.5" y2="16" stroke="#ff7a00" stroke-width="1"/></g>
<rect x="1194" y="0" width="16" height="16" fill="#000"/><rect x="1195.5" y="1.5" width="13" height="13" fill="#000" stroke="#bdbdbd" stroke-width="1"/>
<rect x="1210" y="0" width="16" height="16" fill="#000"/><rect x="1211.5" y="1.5" width="13" height="13" fill="#000" stroke="#bdbdbd" stroke-width="1"/>
<rect x="1226" y="0" width="16" height="16" fill="#000"/><rect x="1227.5" y="1.5" width="13" height="13" fill="#000" stroke="#bdbdbd" stroke-width="1"/>
<rect x="1242" y="0" width="16" height="16" fill="#000"/><rect x="1243.5" y="1.5" width="13" height="13" fill="#000" stroke="#bdbdbd" stroke-width="1"/>
<rect x="1201" y="3" width="2" height="3" fill="#bdbdbd"/>
<rect x="1201" y="7" width="2" height="2" fill="#bdbdbd"/>
<rect x="1201" y="10" width="2" height="3" fill="#bdbdbd"/>
<rect x="1197" y="7" width="3" height="2" fill="#bdbdbd"/>
<rect x="1204" y="7" width="3" height="2" fill="#bdbdbd"/>
<rect x="1214" y="4" width="1" height="8" fill="#bdbdbd"/><rect x="1213" y="11" width="10" height="1" fill="#bdbdbd"/><rect x="1217" y="4" width="1" height="6" fill="#bdbdbd"/><polygon points="1221,4 1218,6.5 1221,9" fill="#bdbdbd" shape-rendering="auto"/><polygon points="1212.5,5 1214.5,3 1216.5,5" fill="#bdbdbd"/><polygon points="1222,9.5 1224,11.5 1222,13.5" fill="#bdbdbd"/>
<rect x="1230" y="4" width="1" height="8" fill="#bdbdbd"/><rect x="1229" y="11" width="10" height="1" fill="#bdbdbd"/><polygon points="1233,4 1238,7.5 1233,11" fill="#bdbdbd" shape-rendering="auto"/><polygon points="1228.5,5 1230.5,3 1232.5,5" fill="#bdbdbd"/><polygon points="1238,9.5 1240,11.5 1238,13.5" fill="#bdbdbd"/>
<rect x="1245.5" y="3.5" width="3" height="9" fill="none" stroke="#bdbdbd"/><rect x="1249" y="7" width="4" height="1" fill="#bdbdbd"/><polygon points="1251,5 1254,7.5 1251,10" fill="#bdbdbd" shape-rendering="auto"/>
<g shape-rendering="auto"><circle cx="29" cy="486.5" r="2.6" fill="#ff0000" stroke="#ffffff" stroke-width="1.2"/><line x1="34.00" y1="486.50" x2="36.00" y2="486.50" stroke="#ff0000" stroke-width="1"/><line x1="32.54" y1="490.04" x2="33.95" y2="491.45" stroke="#ff0000" stroke-width="1"/><line x1="29.00" y1="491.50" x2="29.00" y2="493.50" stroke="#ff0000" stroke-width="1"/><line x1="25.46" y1="490.04" x2="24.05" y2="491.45" stroke="#ff0000" stroke-width="1"/><line x1="24.00" y1="486.50" x2="22.00" y2="486.50" stroke="#ff0000" stroke-width="1"/><line x1="25.46" y1="482.96" x2="24.05" y2="481.55" stroke="#ff0000" stroke-width="1"/><line x1="29.00" y1="481.50" x2="29.00" y2="479.50" stroke="#ff0000" stroke-width="1"/><line x1="32.54" y1="482.96" x2="33.95" y2="481.55" stroke="#ff0000" stroke-width="1"/></g>
<polygon points="1318,124 1322,120 1326,124" fill="#f09a30"/><polygon points="1318,128 1322,124 1326,128" fill="#f09a30"/>
</svg>
<div style="position:absolute;left:0;top:0;width:19px;height:701px;background:#060606"></div><div style="position:absolute;left:0;top:0;width:19px;height:51px;background:#23252b"></div><div style="position:absolute;left:0;top:51px;width:19px;height:46px;background:#ff6a00"></div><div style="position:absolute;left:0;top:97px;width:19px;height:52px;background:#23252b"></div><div style="position:absolute;left:0;top:150px;width:19px;height:64px;background:#23252b"></div><div class="t" style="left:0;width:19px;text-align:center;top:6px;color:#b8b8b8;font-size:13px;line-height:13px">分</div><div class="t" style="left:0;width:19px;text-align:center;top:20px;color:#b8b8b8;font-size:13px;line-height:13px">时</div><div class="t" style="left:0;width:19px;text-align:center;top:34px;color:#b8b8b8;font-size:13px;line-height:13px">图</div><div class="t" style="left:0;width:19px;text-align:center;top:56px;color:#fff;font-size:11px;line-height:11px;font-family:'Liberation Serif',serif">K</div><div class="t" style="left:0;width:19px;text-align:center;top:69px;color:#ffffff;font-size:13px;line-height:13px">线</div><div class="t" style="left:0;width:19px;text-align:center;top:83px;color:#ffffff;font-size:13px;line-height:13px">图</div><div class="t" style="left:0;width:19px;text-align:center;top:104.0px;color:#b8b8b8;font-size:13px;line-height:13px">闪</div><div class="t" style="left:0;width:19px;text-align:center;top:117.5px;color:#b8b8b8;font-size:13px;line-height:13px">电</div><div class="t" style="left:0;width:19px;text-align:center;top:131.0px;color:#b8b8b8;font-size:13px;line-height:13px">图</div><div class="t" style="left:0;width:19px;text-align:center;top:157.0px;color:#b8b8b8;font-size:13px;line-height:13px">合</div><div class="t" style="left:0;width:19px;text-align:center;top:170.5px;color:#b8b8b8;font-size:13px;line-height:13px">约</div><div class="t" style="left:0;width:19px;text-align:center;top:184.0px;color:#b8b8b8;font-size:13px;line-height:13px">资</div><div class="t" style="left:0;width:19px;text-align:center;top:197.5px;color:#b8b8b8;font-size:13px;line-height:13px">料</div><div class="t" style="left:92px;top:3px;color:#dcdcdc;font-size:12px;">现货黄金</div><div class="t" style="left:140px;top:3px;color:#f07020;font-size:12px;">【240分】</div><div class="t" style="left:229px;top:3px;color:#dcdcdc;font-size:12px;">BOLL(20,2)</div><div class="t" style="left:296px;top:3px;color:#dcdcdc;font-size:12px;">MID:4429.48</div><div class="t" style="left:377px;top:3px;color:#c8c820;font-size:12px;">UPPER:4532.61</div><div class="t" style="left:471px;top:3px;color:#c030d0;font-size:12px;">LOWER:4326.36</div><div class="t" style="left:580px;top:3px;color:#dcdcdc;font-size:12px;">MA(0,0,0,60,0,0)</div><div class="t" style="left:676px;top:3px;color:#dcdcdc;font-size:12px;">MA0:4462.22</div><div class="t" style="left:759px;top:3px;color:#c8c820;font-size:12px;">MA0:4462.22</div><div class="t" style="left:842px;top:3px;color:#c030d0;font-size:12px;">MA0:4462.22</div><div class="t" style="left:925px;top:3px;color:#20c820;font-size:12px;">MA60:4427.92</div><div class="t" style="left:1014px;top:3px;color:#8c8c8c;font-size:12px;">MA0:4462.22</div><div class="t" style="left:1097px;top:3px;color:#e03030;font-size:12px;">MA</div><div class="t" style="right:1241px;top:14px;color:#e8e8e8;font-size:12px;text-align:right;">4615.90</div><div class="t" style="left:1262px;top:14px;color:#e8e8e8;font-size:12px;">4615.90</div><div class="t" style="right:1241px;top:71px;color:#e8e8e8;font-size:12px;text-align:right;">4533.25</div><div class="t" style="left:1262px;top:71px;color:#e8e8e8;font-size:12px;">4533.25</div><div class="t" style="right:1241px;top:128px;color:#e8e8e8;font-size:12px;text-align:right;">4450.59</div><div class="t" style="right:1241px;top:185px;color:#e8e8e8;font-size:12px;text-align:right;">4367.94</div><div class="t" style="left:1262px;top:185px;color:#e8e8e8;font-size:12px;">4367.94</div><div class="t" style="right:1241px;top:242px;color:#e8e8e8;font-size:12px;text-align:right;">4285.29</div><div class="t" style="left:1262px;top:242px;color:#e8e8e8;font-size:12px;">4285.29</div><div class="t" style="right:1241px;top:300px;color:#e8e8e8;font-size:12px;text-align:right;">4202.64</div><div class="t" style="left:1262px;top:300px;color:#e8e8e8;font-size:12px;">4202.64</div><div class="t" style="right:1241px;top:357px;color:#e8e8e8;font-size:12px;text-align:right;">4119.99</div><div class="t" style="left:1262px;top:357px;color:#e8e8e8;font-size:12px;">4119.99</div><div class="t" style="right:1241px;top:414px;color:#e8e8e8;font-size:12px;text-align:right;">4037.33</div><div class="t" style="left:1262px;top:414px;color:#e8e8e8;font-size:12px;">4037.33</div><div class="t" style="right:1241px;top:494px;color:#e8e8e8;font-size:12px;text-align:right;">45.83</div><div class="t" style="left:1262px;top:494px;color:#e8e8e8;font-size:12px;">45.83</div><div class="t" style="right:1241px;top:517px;color:#e8e8e8;font-size:12px;text-align:right;">31.74</div><div class="t" style="left:1262px;top:517px;color:#e8e8e8;font-size:12px;">31.74</div><div class="t" style="right:1241px;top:541px;color:#e8e8e8;font-size:12px;text-align:right;">17.65</div><div class="t" style="left:1262px;top:541px;color:#e8e8e8;font-size:12px;">17.65</div><div class="t" style="right:1241px;top:564px;color:#e8e8e8;font-size:12px;text-align:right;">3.56</div><div class="t" style="left:1262px;top:564px;color:#e8e8e8;font-size:12px;">3.56</div><div class="t" style="right:1241px;top:587px;color:#e8e8e8;font-size:12px;text-align:right;">-10.53</div><div class="t" style="left:1262px;top:587px;color:#e8e8e8;font-size:12px;">-10.53</div><div class="t" style="right:1241px;top:610px;color:#e8e8e8;font-size:12px;text-align:right;">-24.62</div><div class="t" style="left:1262px;top:610px;color:#e8e8e8;font-size:12px;">-24.62</div><div class="t" style="right:1241px;top:634px;color:#e8e8e8;font-size:12px;text-align:right;">-38.70</div><div class="t" style="left:1262px;top:634px;color:#e8e8e8;font-size:12px;">-38.70</div><div class="t" style="left:92px;top:483px;color:#dcdcdc;font-size:12px;">MACD(26,12,9)</div><div class="t" style="left:182px;top:483px;color:#dcdcdc;font-size:12px;">DIFF:22.86</div><div class="t" style="left:250px;top:483px;color:#c8c820;font-size:12px;">DEA:19.59</div><div class="t" style="left:316px;top:483px;color:#c030d0;font-size:12px;">MACD:6.54</div><div class="t" style="left:90px;width:60px;top:667px;text-align:center;color:#e8e8e8;font-size:12px;font-weight:bold">11/13</div><div class="t" style="left:270px;width:60px;top:667px;text-align:center;color:#e8e8e8;font-size:12px;font-weight:bold">11/21</div><div class="t" style="left:420px;width:60px;top:667px;text-align:center;color:#e8e8e8;font-size:12px;font-weight:bold">11/28</div><div class="t" style="left:570px;width:60px;top:667px;text-align:center;color:#e8e8e8;font-size:12px;font-weight:bold">12/05</div><div class="t" style="left:722px;width:60px;top:667px;text-align:center;color:#e8e8e8;font-size:12px;font-weight:bold">12/12</div><div class="t" style="left:872px;width:60px;top:667px;text-align:center;color:#e8e8e8;font-size:12px;font-weight:bold">12/19</div><div class="t" style="left:1045px;width:60px;top:667px;text-align:center;color:#e8e8e8;font-size:12px;font-weight:bold">12/30</div><div class="t" style="left:1196px;width:60px;top:667px;text-align:center;color:#e8e8e8;font-size:12px;font-weight:bold">01/07</div><div class="t" style="left:30px;top:668px;color:#ff6a00;font-size:12px;font-weight:bold">240分 ▲</div><div style="position:absolute;left:19px;top:686px;width:598px;height:15px;background:#070707"></div><div style="position:absolute;left:20px;top:686px;width:39px;height:14px;background:#ff6a00"></div><div style="position:absolute;left:99px;top:686px;width:1px;height:15px;background:#262626"></div><div style="position:absolute;left:157px;top:686px;width:1px;height:15px;background:#262626"></div><div style="position:absolute;left:185px;top:686px;width:1px;height:15px;background:#262626"></div><div style="position:absolute;left:225px;top:686px;width:1px;height:15px;background:#262626"></div><div style="position:absolute;left:265px;top:686px;width:1px;height:15px;background:#262626"></div><div style="position:absolute;left:299px;top:686px;width:1px;height:15px;background:#262626"></div><div style="position:absolute;left:333px;top:686px;width:1px;height:15px;background:#262626"></div><div style="position:absolute;left:373px;top:686px;width:1px;height:15px;background:#262626"></div><div style="position:absolute;left:408px;top:686px;width:1px;height:15px;background:#262626"></div><div style="position:absolute;left:435px;top:686px;width:1px;height:15px;background:#262626"></div><div style="position:absolute;left:470px;top:686px;width:1px;height:15px;background:#262626"></div><div style="position:absolute;left:510px;top:686px;width:1px;height:15px;background:#262626"></div><div style="position:absolute;left:542px;top:686px;width:1px;height:15px;background:#262626"></div><div style="position:absolute;left:577px;top:686px;width:1px;height:15px;background:#262626"></div><div style="position:absolute;left:617px;top:686px;width:1px;height:15px;background:#262626"></div><div class="t" style="left:20px;width:39px;text-align:center;top:686px;color:#ffffff;font-size:13px;line-height:14px">指标</div><div class="t" style="left:60px;width:39px;text-align:center;top:686px;color:#ffffff;font-size:13px;line-height:14px">模板</div><div class="t" style="left:99px;width:58px;text-align:center;top:686px;color:#ff7a10;font-size:12px;line-height:14px">VIP指标</div><div class="t" style="left:157px;width:28px;text-align:center;top:687px;color:#c8c8c8;font-size:11px;line-height:13px;letter-spacing:-0.6px;font-family:'Liberation Mono',monospace">MA</div><div class="t" style="left:185px;width:40px;text-align:center;top:687px;color:#c8c8c8;font-size:11px;line-height:13px;letter-spacing:-0.6px;font-family:'Liberation Mono',monospace">MACD</div><div class="t" style="left:225px;width:40px;text-align:center;top:687px;color:#c8c8c8;font-size:11px;line-height:13px;letter-spacing:-0.6px;font-family:'Liberation Mono',monospace">BIAS</div><div class="t" style="left:265px;width:34px;text-align:center;top:687px;color:#c8c8c8;font-size:11px;line-height:13px;letter-spacing:-0.6px;font-family:'Liberation Mono',monospace">CCI</div><div class="t" style="left:299px;width:34px;text-align:center;top:687px;color:#c8c8c8;font-size:11px;line-height:13px;letter-spacing:-0.6px;font-family:'Liberation Mono',monospace">KDJ</div><div class="t" style="left:333px;width:40px;text-align:center;top:687px;color:#c8c8c8;font-size:11px;line-height:13px;letter-spacing:-0.6px;font-family:'Liberation Mono',monospace">LW&amp;</div><div class="t" style="left:373px;width:35px;text-align:center;top:687px;color:#c8c8c8;font-size:11px;line-height:13px;letter-spacing:-0.6px;font-family:'Liberation Mono',monospace">RSI</div><div class="t" style="left:408px;width:27px;text-align:center;top:687px;color:#c8c8c8;font-size:11px;line-height:13px;letter-spacing:-0.6px;font-family:'Liberation Mono',monospace">CR</div><div class="t" style="left:435px;width:35px;text-align:center;top:687px;color:#c8c8c8;font-size:11px;line-height:13px;letter-spacing:-0.6px;font-family:'Liberation Mono',monospace">PSY</div><div class="t" style="left:470px;width:40px;text-align:center;top:687px;color:#c8c8c8;font-size:11px;line-height:13px;letter-spacing:-0.6px;font-family:'Liberation Mono',monospace">BOLL</div><div class="t" style="left:510px;width:32px;text-align:center;top:687px;color:#c8c8c8;font-size:11px;line-height:13px;letter-spacing:-0.6px;font-family:'Liberation Mono',monospace">VOL</div><div class="t" style="left:542px;width:35px;text-align:center;top:687px;color:#c8c8c8;font-size:11px;line-height:13px;letter-spacing:-0.6px;font-family:'Liberation Mono',monospace">OBV</div><div class="t" style="left:577px;width:40px;text-align:center;top:686px;color:#c8c8c8;font-size:13px;line-height:14px">设置</div><div class="t" style="left:133px;top:264px;color:#f05060;font-size:12px;font-weight:bold">4244.96</div><div class="t" style="left:218px;top:451px;color:#50c090;font-size:12px;font-weight:bold">3997.94</div><div class="t" style="left:1034px;top:53px;color:#f05060;font-size:12px;font-weight:bold">4549.69</div><div style="position:absolute;left:1258px;top:128px;width:67px;height:16px;border:1px solid #f09a30;background:#000"></div><div class="t" style="left:1261px;top:130px;color:#f09a30;font-size:12px;">4462.47</div><div class="t" style="left:1199px;top:648px;color:#e6e8ee;font-size:30px;letter-spacing:2.5px">FX678</div>
</body></html>
